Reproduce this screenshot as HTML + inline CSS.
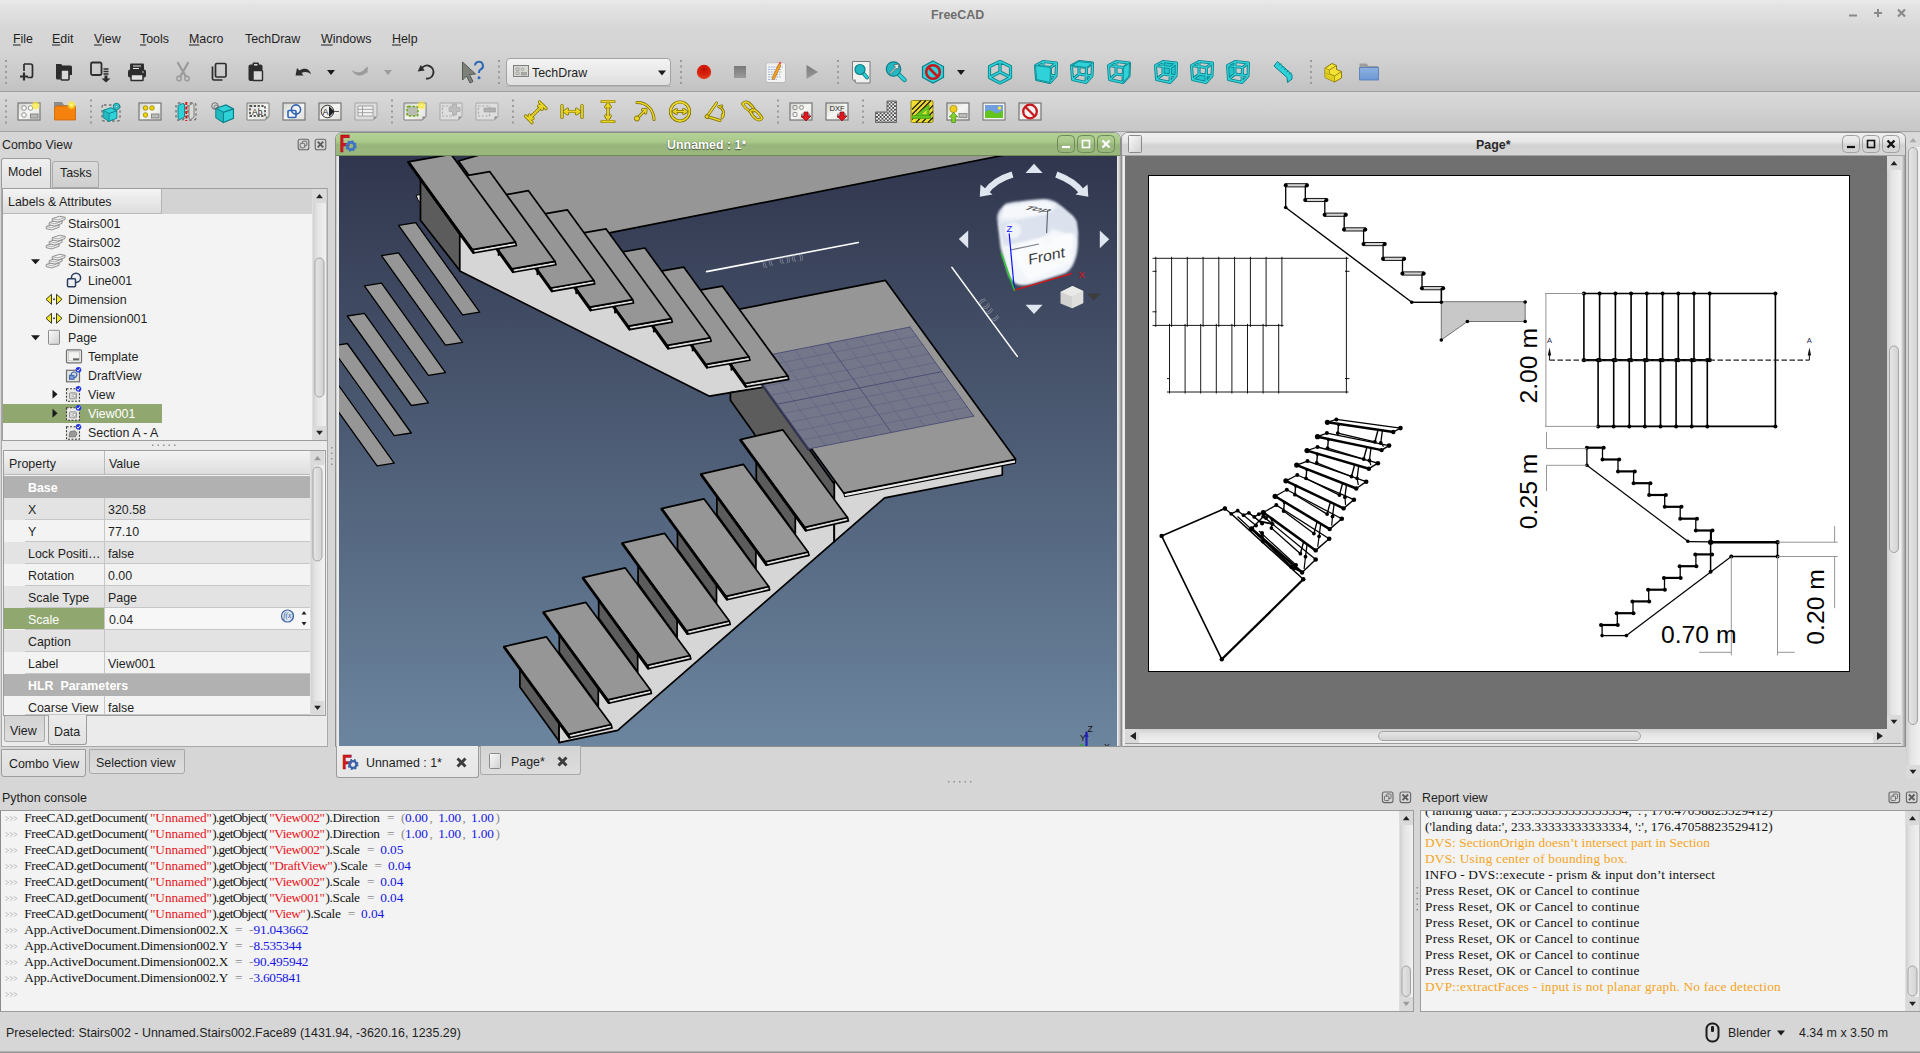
<!DOCTYPE html>
<html><head><meta charset="utf-8"><title>FreeCAD</title>
<style>
*{box-sizing:border-box;margin:0;padding:0}
html,body{width:1920px;height:1053px;overflow:hidden;background:#d6d6d6}
body{position:relative;font-family:"Liberation Sans",sans-serif;font-size:13px;color:#1f1f1f}
.abs{position:absolute}
.t{position:absolute;white-space:nowrap;line-height:16px;height:16px;transform-origin:0 0;transform:translateY(0.5px) scaleX(0.955)}
u{text-decoration:underline;text-underline-offset:2px}
svg{position:absolute;overflow:visible}
.tab{position:absolute;border:1px solid #a9a9a9;border-radius:3px 3px 0 0;background:linear-gradient(#dcdcdc,#cfcfcf)}
.tab.on{background:linear-gradient(#efefef,#e0e0e0);border-color:#9c9c9c}
.serif{font-family:"Liberation Serif",serif}
</style>
</head>
<body>
<div class="abs" style="left:0;top:0;width:1920px;height:91px;background:linear-gradient(#e9e9e9 0,#e2e2e2 8px,#d7d7d7 28px,#d4d4d4 52px,#c6c6c6 84px,#c2c2c2 91px)"></div>
<div class="abs" style="left:0;top:91px;width:1920px;height:1px;background:#9f9f9f"></div>
<div class="abs" style="left:0;top:92px;width:1920px;height:39px;background:linear-gradient(#d9d9d9,#c7c7c7)"></div>
<div class="abs" style="left:0;top:131px;width:1920px;height:1px;background:#a3a3a3"></div>
<div class="t" style="left:931px;top:6px;font-weight:bold;color:#6e6e6e;font-size:13px">FreeCAD</div>
<svg style="left:0;top:0" width="1920" height="28"><path d="M1849 15.5 h8" stroke="#8a8a8a" stroke-width="2"/><path d="M1874 13 h8 M1878 9 v8" stroke="#8a8a8a" stroke-width="2"/><path d="M1898 9.5 l7 7 M1905 9.5 l-7 7" stroke="#8a8a8a" stroke-width="2.2"/></svg>
<div class="t" style="left:13px;top:30px"><u>F</u>ile</div>
<div class="t" style="left:52px;top:30px"><u>E</u>dit</div>
<div class="t" style="left:94px;top:30px"><u>V</u>iew</div>
<div class="t" style="left:140px;top:30px"><u>T</u>ools</div>
<div class="t" style="left:189px;top:30px"><u>M</u>acro</div>
<div class="t" style="left:245px;top:30px">TechDraw</div>
<div class="t" style="left:321px;top:30px"><u>W</u>indows</div>
<div class="t" style="left:392px;top:30px"><u>H</u>elp</div>
<svg style="left:0;top:0" width="1920" height="132"><defs>
<radialGradient id="gred" cx="0.5" cy="0.3" r="0.8"><stop offset="0" stop-color="#c80d00"/><stop offset="0.6" stop-color="#d92810"/><stop offset="1" stop-color="#e8552a"/></radialGradient>
<linearGradient id="ggray" x1="0" y1="0" x2="0" y2="1"><stop offset="0" stop-color="#7a7a7a"/><stop offset="1" stop-color="#9a9a9a"/></linearGradient>
<linearGradient id="gblue" x1="0" y1="0" x2="0" y2="1"><stop offset="0" stop-color="#8fb2e0"/><stop offset="1" stop-color="#6b98d6"/></linearGradient>
<linearGradient id="gpage" x1="0" y1="0" x2="1" y2="1"><stop offset="0" stop-color="#d2d4ce"/><stop offset="0.5" stop-color="#f6f6f4"/><stop offset="1" stop-color="#dcdcd8"/></linearGradient>
<radialGradient id="gglow"><stop offset="0" stop-color="#fffbd0"/><stop offset="0.35" stop-color="#fbe93a"/><stop offset="1" stop-color="#fbe93a" stop-opacity="0"/></radialGradient>
<pattern id="xh" width="3.6" height="3.6" patternUnits="userSpaceOnUse"><rect width="3.6" height="3.6" fill="#f2f2f2"/><path d="M0 0 L3.6 3.6 M3.6 0 L0 3.6" stroke="#4a4a4a" stroke-width="0.9"/></pattern>
</defs><rect x="5" y="60.0" width="2" height="2" fill="#9a9a9a"/><rect x="5" y="65.5" width="2" height="2" fill="#9a9a9a"/><rect x="5" y="71.0" width="2" height="2" fill="#9a9a9a"/><rect x="5" y="76.5" width="2" height="2" fill="#9a9a9a"/><rect x="5" y="82.0" width="2" height="2" fill="#9a9a9a"/><rect x="498" y="60.0" width="2" height="2" fill="#9a9a9a"/><rect x="498" y="65.5" width="2" height="2" fill="#9a9a9a"/><rect x="498" y="71.0" width="2" height="2" fill="#9a9a9a"/><rect x="498" y="76.5" width="2" height="2" fill="#9a9a9a"/><rect x="498" y="82.0" width="2" height="2" fill="#9a9a9a"/><rect x="680" y="60.0" width="2" height="2" fill="#9a9a9a"/><rect x="680" y="65.5" width="2" height="2" fill="#9a9a9a"/><rect x="680" y="71.0" width="2" height="2" fill="#9a9a9a"/><rect x="680" y="76.5" width="2" height="2" fill="#9a9a9a"/><rect x="680" y="82.0" width="2" height="2" fill="#9a9a9a"/><rect x="837" y="60.0" width="2" height="2" fill="#9a9a9a"/><rect x="837" y="65.5" width="2" height="2" fill="#9a9a9a"/><rect x="837" y="71.0" width="2" height="2" fill="#9a9a9a"/><rect x="837" y="76.5" width="2" height="2" fill="#9a9a9a"/><rect x="837" y="82.0" width="2" height="2" fill="#9a9a9a"/><rect x="1310" y="60.0" width="2" height="2" fill="#9a9a9a"/><rect x="1310" y="65.5" width="2" height="2" fill="#9a9a9a"/><rect x="1310" y="71.0" width="2" height="2" fill="#9a9a9a"/><rect x="1310" y="76.5" width="2" height="2" fill="#9a9a9a"/><rect x="1310" y="82.0" width="2" height="2" fill="#9a9a9a"/><g transform="translate(27,72)"><path d="M-3 -8 h6.5 a2 2 0 0 1 2 2 v9.5 a2 2 0 0 1 -2 2 h-3" fill="none" stroke="#2d2d2d" stroke-width="1.7"/><path d="M-3 -8 v7" stroke="#2d2d2d" stroke-width="1.7" fill="none"/><path d="M-7 4.5 h8 M-3 0.5 v8" stroke="#2d2d2d" stroke-width="2.2"/></g><g transform="translate(64,72)"><path d="M-8 -8 h5 l1.5 1.5 h8 a1.5 1.5 0 0 1 1.5 1.5 v8 h-16z" fill="#2d2d2d"/><rect x="-3" y="-2" width="8" height="10" rx="1" fill="#d9d9d9" stroke="#2d2d2d" stroke-width="1.6"/><path d="M-8 3 v3 a1.5 1.5 0 0 0 1.5 1.5 h3 v-4.5z" fill="#2d2d2d"/></g><g transform="translate(100,72)"><rect x="-9" y="-9.5" width="10.5" height="12.5" rx="1.5" fill="none" stroke="#2d2d2d" stroke-width="1.8"/><path d="M3.5 -3 h5 M3.5 -0.5 h5 M3.5 2 h5" stroke="#2d2d2d" stroke-width="1.3"/><path d="M4.5 3.5 h3 v3 h3 l-4.5 4 l-4.5 -4 h3z" fill="#2d2d2d"/></g><g transform="translate(137,72)"><rect x="-7" y="-8.5" width="14" height="8" rx="1" fill="#2d2d2d"/><path d="M-4 -6 h8 M-4 -3.5 h6" stroke="#e6e6e6" stroke-width="1.2"/><rect x="-9" y="-2.5" width="18" height="8" rx="2" fill="#2d2d2d"/><rect x="-6" y="2.5" width="12" height="6" rx="0.5" fill="#e2e2e2" stroke="#2d2d2d" stroke-width="1.5"/><circle cx="6" cy="0" r="0.8" fill="#ddd"/></g><g transform="translate(183,72)"><path d="M-5 -9 L2.5 4 M5 -9 L-2.5 4" stroke="#9a9a9a" stroke-width="2.2" stroke-linecap="round"/><circle cx="-4" cy="6.5" r="2.2" fill="none" stroke="#9a9a9a" stroke-width="1.4"/><circle cx="4" cy="6.5" r="2.2" fill="none" stroke="#9a9a9a" stroke-width="1.4"/></g><g transform="translate(219,72)"><rect x="-3.5" y="-8.5" width="10.5" height="13.5" rx="1.3" fill="none" stroke="#2d2d2d" stroke-width="1.7"/><path d="M-6.5 -5.5 v12 a1.5 1.5 0 0 0 1.5 1.5 h8.5" fill="none" stroke="#2d2d2d" stroke-width="1.7"/></g><g transform="translate(256,72)"><rect x="-7.5" y="-7.5" width="14" height="16.5" rx="2" fill="#2d2d2d"/><rect x="-3.5" y="-9.5" width="6.5" height="4" rx="1.2" fill="#2d2d2d"/><rect x="-2" y="-8" width="3.5" height="1.6" fill="#d6d6d6"/><rect x="-3" y="-1.5" width="9.5" height="10" rx="0.8" fill="#d8d8d8" stroke="#2d2d2d" stroke-width="1.4"/></g><g transform="translate(303,72)"><path d="M-7.5 3.5 L-6 -4 L-3.5 -1.5 C1 -5 7 -3.5 8 2.5 C5 -0.5 1.5 -0.5 -1.5 1 L0.5 3.5 Z" fill="#2d2d2d"/></g><g transform="translate(360,72)"><path d="M7.5 1.5 L7.8 -5.5 L5 -3.5 C2.5 1 -3.5 1.5 -8 -2 C-6 4 2 5.5 6.5 0.5 Z" fill="#9c9c9c"/></g><g transform="translate(426,72)"><path d="M-4.5 -3.5 A6.5 6.5 0 1 1 0 6.5" fill="none" stroke="#2d2d2d" stroke-width="1.9"/><path d="M-8.3 -0.5 L-5.3 -7 L-1.3 -1.5 Z" fill="#2d2d2d"/></g><g transform="translate(472,72)"><path d="M-9.500 -10 L3.500 2 L-2.500 2.500 L1 9.500 L-2 11 L-5.500 4 L-9.500 8 Z" fill="#7c8279" stroke="#4b4f49" stroke-width="0.9"/><path d="M3 -6.500 a4 4 0 1 1 5.500 4 q-1.600 0.800 -1.600 3.500" fill="none" stroke="#2f6ab5" stroke-width="2"/><circle cx="7" cy="5.800" r="1.500" fill="#2f6ab5"/></g><g transform="translate(704,72)"><circle cx="0" cy="0" r="7.2" fill="url(#gred)"/></g><g transform="translate(740,72)"><rect x="-6" y="-6" width="12" height="12" fill="url(#ggray)"/></g><g transform="translate(776,72)"><rect x="-10" y="-9.5" width="19.5" height="20" rx="2" fill="#f4f4f2" stroke="#b8b8b8" stroke-width="1"/><path d="M-8 -5 h15 M-8 -2.5 h13 M-8 0 h14 M-8 2.5 h12 M-8 5 h13 M-8 7.5 h9" stroke="#8aa4d6" stroke-width="0.8" stroke-dasharray="2 0.7"/><path d="M-7 -10.5 v3 M-4 -10.5 v3 M-1 -10.5 v3 M2 -10.5 v3 M5 -10.5 v3 M8 -10.5 v3" stroke="#d8d8d8" stroke-width="1.3"/><path d="M2.5 -8 L5 -7 L-1.5 7 L-3.5 7.5 L-3.8 5.5 Z" fill="#f0a020" stroke="#b86c0a" stroke-width="0.6"/><circle cx="4" cy="-9" r="1.3" fill="#e2605a"/></g><g transform="translate(812,72)"><path d="M-5.5 -7 L6 0 L-5.5 7 Z" fill="url(#ggray)"/></g><g transform="translate(861,72)"><path d="M-8.5 -10.5 h17.5 v21.5 h-14 l-3.5 -3.5z" fill="#f0f0ee" stroke="#7a7a7a" stroke-width="1"/><path d="M-8.5 7.5 h3.5 v3.5z" fill="#9a9a9a"/><path d="M-1 -2.5 L6 5.5" stroke="#0b7f88" stroke-width="3.8" stroke-linecap="round"/><path d="M-1 -2.5 L6 5.5" stroke="#2fd2d8" stroke-width="2.0" stroke-linecap="round"/><circle cx="-1" cy="-2.5" r="5" fill="#22b8c2" stroke="#0b7f88" stroke-width="1.2"/></g><g transform="translate(896,72)"><path d="M-2.5 -3 L8.5 8" stroke="#0b7f88" stroke-width="4.4" stroke-linecap="round"/><path d="M-2.5 -3 L8.5 8" stroke="#2fd2d8" stroke-width="2.6" stroke-linecap="round"/><circle cx="-2.5" cy="-3" r="7.2" fill="#22b8c2" stroke="#0b7f88" stroke-width="1.2"/><path d="M-6.5 1 L-0.5 -5 L-2.5 -7 L3 -8 L2 -2.5 L0.5 -4 L-5.5 2 Z" fill="#e8e8e8" stroke="#555" stroke-width="0.7"/></g><g transform="translate(933,72)"><path d="M0 -11 L10.5 -5.5 V5.5 L0 11 L-10.5 5.5 V-5.5 Z" fill="#2fd2d8" stroke="#0b7f88" stroke-width="1.2"/><circle cx="0" cy="0" r="6.8" fill="none" stroke="#c8161d" stroke-width="2.6"/><path d="M-4.76 -4.76 L4.76 4.76" stroke="#c8161d" stroke-width="2.6"/></g><g transform="translate(1000,72)"><path d="M0 -10.5 L10.5 -5.5 V5.5 L0 11 L-10.5 5.5 V-5.5 Z M0 -10.5 V0 M0 0 L-10.5 5.5 M0 0 L10.5 5.5" fill="none" stroke="#0b7f88" stroke-width="3.2" stroke-linejoin="round"/><path d="M0 -10.5 L10.5 -5.5 V5.5 L0 11 L-10.5 5.5 V-5.5 Z M0 -10.5 V0 M0 0 L-10.5 5.5 M0 0 L10.5 5.5" fill="none" stroke="#2fd2d8" stroke-width="1.5" stroke-linejoin="round"/></g><g transform="translate(1046,72)"><path d="M-10.5 -6.5 L4.5 -4.5 L4 10.5 L-9.5 7.5 Z M-3 -10.5 L10.5 -9 L10 4 L-3 2 Z M-10.5 -6.5 L-3 -10.5 M4.5 -4.5 L10.5 -9 M4 10.5 L10 4 M-9.5 7.5 L-3 2" fill="none" stroke="#0b7f88" stroke-width="3" stroke-linejoin="round"/><path d="M-10.5 -6.5 L4.5 -4.5 L4 10.5 L-9.5 7.5 Z M-3 -10.5 L10.5 -9 L10 4 L-3 2 Z M-10.5 -6.5 L-3 -10.5 M4.5 -4.5 L10.5 -9 M4 10.5 L10 4 M-9.5 7.5 L-3 2" fill="none" stroke="#2fd2d8" stroke-width="1.4" stroke-linejoin="round"/><path d="M-10.5 -6.5 L4.5 -4.5 L4 10.5 L-9.5 7.5 Z" fill="#2fd2d8" stroke="#0b7f88" stroke-width="0.8"/></g><g transform="translate(1082,72)"><path d="M-10.5 -6.5 L4.5 -4.5 L4 10.5 L-9.5 7.5 Z M-3 -10.5 L10.5 -9 L10 4 L-3 2 Z M-10.5 -6.5 L-3 -10.5 M4.5 -4.5 L10.5 -9 M4 10.5 L10 4 M-9.5 7.5 L-3 2" fill="none" stroke="#0b7f88" stroke-width="3" stroke-linejoin="round"/><path d="M-10.5 -6.5 L4.5 -4.5 L4 10.5 L-9.5 7.5 Z M-3 -10.5 L10.5 -9 L10 4 L-3 2 Z M-10.5 -6.5 L-3 -10.5 M4.5 -4.5 L10.5 -9 M4 10.5 L10 4 M-9.5 7.5 L-3 2" fill="none" stroke="#2fd2d8" stroke-width="1.4" stroke-linejoin="round"/><path d="M-10.5 -6.5 L4.5 -4.5 L10.5 -9 L-3 -10.5 Z" fill="#2fd2d8" stroke="#0b7f88" stroke-width="0.8"/></g><g transform="translate(1119,72)"><path d="M-10.5 -6.5 L4.5 -4.5 L4 10.5 L-9.5 7.5 Z M-3 -10.5 L10.5 -9 L10 4 L-3 2 Z M-10.5 -6.5 L-3 -10.5 M4.5 -4.5 L10.5 -9 M4 10.5 L10 4 M-9.5 7.5 L-3 2" fill="none" stroke="#0b7f88" stroke-width="3" stroke-linejoin="round"/><path d="M-10.5 -6.5 L4.5 -4.5 L4 10.5 L-9.5 7.5 Z M-3 -10.5 L10.5 -9 L10 4 L-3 2 Z M-10.5 -6.5 L-3 -10.5 M4.5 -4.5 L10.5 -9 M4 10.5 L10 4 M-9.5 7.5 L-3 2" fill="none" stroke="#2fd2d8" stroke-width="1.4" stroke-linejoin="round"/><path d="M4.5 -4.5 L10.5 -9 L10 4 L4 10.5 Z" fill="#2fd2d8" stroke="#0b7f88" stroke-width="0.8"/></g><g transform="translate(1166,72)"><path d="M-3 -10.5 L10.5 -9 L10 4 L-3 2 Z" fill="#25c3cc"/><path d="M-10.5 -6.5 L4.5 -4.5 L4 10.5 L-9.5 7.5 Z M-3 -10.5 L10.5 -9 L10 4 L-3 2 Z M-10.5 -6.5 L-3 -10.5 M4.5 -4.5 L10.5 -9 M4 10.5 L10 4 M-9.5 7.5 L-3 2" fill="none" stroke="#0b7f88" stroke-width="3" stroke-linejoin="round"/><path d="M-10.5 -6.5 L4.5 -4.5 L4 10.5 L-9.5 7.5 Z M-3 -10.5 L10.5 -9 L10 4 L-3 2 Z M-10.5 -6.5 L-3 -10.5 M4.5 -4.5 L10.5 -9 M4 10.5 L10 4 M-9.5 7.5 L-3 2" fill="none" stroke="#2fd2d8" stroke-width="1.4" stroke-linejoin="round"/></g><g transform="translate(1202,72)"><path d="M-9.5 7.5 L4 10.5 L10 4 L-3 2 Z" fill="#25c3cc"/><path d="M-10.5 -6.5 L4.5 -4.5 L4 10.5 L-9.5 7.5 Z M-3 -10.5 L10.5 -9 L10 4 L-3 2 Z M-10.5 -6.5 L-3 -10.5 M4.5 -4.5 L10.5 -9 M4 10.5 L10 4 M-9.5 7.5 L-3 2" fill="none" stroke="#0b7f88" stroke-width="3" stroke-linejoin="round"/><path d="M-10.5 -6.5 L4.5 -4.5 L4 10.5 L-9.5 7.5 Z M-3 -10.5 L10.5 -9 L10 4 L-3 2 Z M-10.5 -6.5 L-3 -10.5 M4.5 -4.5 L10.5 -9 M4 10.5 L10 4 M-9.5 7.5 L-3 2" fill="none" stroke="#2fd2d8" stroke-width="1.4" stroke-linejoin="round"/></g><g transform="translate(1238,72)"><path d="M-10.5 -6.5 L-3 -10.5 L-3 2 L-9.5 7.5 Z" fill="#25c3cc"/><path d="M-10.5 -6.5 L4.5 -4.5 L4 10.5 L-9.5 7.5 Z M-3 -10.5 L10.5 -9 L10 4 L-3 2 Z M-10.5 -6.5 L-3 -10.5 M4.5 -4.5 L10.5 -9 M4 10.5 L10 4 M-9.5 7.5 L-3 2" fill="none" stroke="#0b7f88" stroke-width="3" stroke-linejoin="round"/><path d="M-10.5 -6.5 L4.5 -4.5 L4 10.5 L-9.5 7.5 Z M-3 -10.5 L10.5 -9 L10 4 L-3 2 Z M-10.5 -6.5 L-3 -10.5 M4.5 -4.5 L10.5 -9 M4 10.5 L10 4 M-9.5 7.5 L-3 2" fill="none" stroke="#2fd2d8" stroke-width="1.4" stroke-linejoin="round"/></g><g transform="translate(1284,72)"><path d="M-10 -6 L-6.5 -10.5 L8 2.5 L8 7 L3.5 10.5 L3 5.5 Z" fill="#2fd2d8" stroke="#0b7f88" stroke-width="1"/><path d="M-5 -6.5 l2 -2 M-2.5 -4.2 l1.6 -1.6 M0 -2 l2 -2 M2.5 0.3 l1.6 -1.6 M5 2.5 l2 -2" stroke="#0b7f88" stroke-width="1"/></g><g transform="translate(1333,72)"><path d="M-8 -4 L-1 -8.5 L3.5 -6.5 L3.5 -2.5 L8.5 -0.5 L8.5 6 L1.5 10 L-8 5.5 Z" fill="#f3e233" stroke="#8d7d0d" stroke-width="1"/><path d="M-8 -4 L-3.5 -2 L3.5 -6.5 M-3.5 -2 V2 L1.5 4 L8.5 -0.5 M1.5 4 V10 M-8 0.8 L-3.5 2.8" fill="none" stroke="#8d7d0d" stroke-width="0.9"/><path d="M-8 -4 L-3.5 -2 V2.8 L1.5 4.5 V10 L-8 5.5 Z" fill="#d8c416" opacity="0.7"/></g><g transform="translate(1369.5,72)"><path d="M-10 -8.5 h7 l2 2.5 h9.5 v4 h-18.5z" fill="#9d9d9d"/><path d="M-10 -4.5 h19 v12.5 h-19z" fill="url(#gblue)" stroke="#4f78b5" stroke-width="0.8"/></g><path d="M327 70 h8 l-4 5z" fill="#1a1a1a"/><path d="M384 70 h8 l-4 5z" fill="#9c9c9c"/><path d="M957 70 h8 l-4 5z" fill="#1a1a1a"/><rect x="506.5" y="58.5" width="164" height="27" rx="3.5" fill="url(#gcombo)" stroke="#a2a2a2"/><defs><linearGradient id="gcombo" x1="0" y1="0" x2="0" y2="1"><stop offset="0" stop-color="#f4f4f4"/><stop offset="1" stop-color="#dedede"/></linearGradient></defs><path d="M506 86.5 h165" stroke="#b4b4b4" stroke-width="1"/><rect x="513.5" y="65.500" width="15" height="11" fill="#d7d9d3" stroke="#7f7f7f"/><rect x="516" y="68" width="3" height="2.5" fill="none" stroke="#888" stroke-width="0.6"/><circle cx="522.5" cy="69.3" r="1.4" fill="none" stroke="#888" stroke-width="0.6"/><rect x="516" y="72" width="3" height="2.5" fill="none" stroke="#888" stroke-width="0.6"/><rect x="521.5" y="72.500" width="5" height="2.5" fill="#aaa" stroke="#888" stroke-width="0.5"/><path d="M658 70.5 h8 l-4 5z" fill="#1a1a1a"/><rect x="5" y="99.5" width="2" height="2" fill="#9a9a9a"/><rect x="5" y="105.0" width="2" height="2" fill="#9a9a9a"/><rect x="5" y="110.5" width="2" height="2" fill="#9a9a9a"/><rect x="5" y="116.0" width="2" height="2" fill="#9a9a9a"/><rect x="5" y="121.5" width="2" height="2" fill="#9a9a9a"/><rect x="90" y="99.5" width="2" height="2" fill="#9a9a9a"/><rect x="90" y="105.0" width="2" height="2" fill="#9a9a9a"/><rect x="90" y="110.5" width="2" height="2" fill="#9a9a9a"/><rect x="90" y="116.0" width="2" height="2" fill="#9a9a9a"/><rect x="90" y="121.5" width="2" height="2" fill="#9a9a9a"/><rect x="391" y="99.5" width="2" height="2" fill="#9a9a9a"/><rect x="391" y="105.0" width="2" height="2" fill="#9a9a9a"/><rect x="391" y="110.5" width="2" height="2" fill="#9a9a9a"/><rect x="391" y="116.0" width="2" height="2" fill="#9a9a9a"/><rect x="391" y="121.5" width="2" height="2" fill="#9a9a9a"/><rect x="512" y="99.5" width="2" height="2" fill="#9a9a9a"/><rect x="512" y="105.0" width="2" height="2" fill="#9a9a9a"/><rect x="512" y="110.5" width="2" height="2" fill="#9a9a9a"/><rect x="512" y="116.0" width="2" height="2" fill="#9a9a9a"/><rect x="512" y="121.5" width="2" height="2" fill="#9a9a9a"/><rect x="777" y="99.5" width="2" height="2" fill="#9a9a9a"/><rect x="777" y="105.0" width="2" height="2" fill="#9a9a9a"/><rect x="777" y="110.5" width="2" height="2" fill="#9a9a9a"/><rect x="777" y="116.0" width="2" height="2" fill="#9a9a9a"/><rect x="777" y="121.5" width="2" height="2" fill="#9a9a9a"/><rect x="862" y="99.5" width="2" height="2" fill="#9a9a9a"/><rect x="862" y="105.0" width="2" height="2" fill="#9a9a9a"/><rect x="862" y="110.5" width="2" height="2" fill="#9a9a9a"/><rect x="862" y="116.0" width="2" height="2" fill="#9a9a9a"/><rect x="862" y="121.5" width="2" height="2" fill="#9a9a9a"/><g transform="translate(29,111.5)"><rect x="-11.0" y="-8.5" width="22" height="17" fill="url(#gpage)" stroke="#7d7d7d" stroke-width="1.3"/><circle cx="-5" cy="-3.5" r="2.3" fill="#fff" stroke="#777" stroke-width="0.8"/><circle cx="1.5" cy="-3.5" r="2.3" fill="#fff" stroke="#777" stroke-width="0.8"/><circle cx="-5" cy="3.5" r="2.3" fill="#fff" stroke="#777" stroke-width="0.8"/><rect x="1.5" y="2.5" width="7.5" height="4" fill="#bbb" stroke="#777" stroke-width="0.8"/><circle cx="6.5" cy="-6" r="5" fill="url(#gglow)"/></g><g transform="translate(65,111.5)"><path d="M-11 -9.5 h8 l2 3 h10 v4 h-20z" fill="#8c8c8c"/><path d="M-10.5 -3.5 L-9 -5.5 h19.5 v14 h-21z" fill="#f4820c" stroke="#c96606" stroke-width="0.8"/><circle cx="6.5" cy="-6.5" r="5" fill="url(#gglow)"/></g><g transform="translate(112,111.5)"><rect x="-10" y="-6.5" width="18" height="16" rx="2" fill="none" stroke="#6f6f6f" stroke-width="1.3" stroke-dasharray="2.5 2.5"/><g transform="translate(-2.5,2.5) scale(1.05)"><path d="M-6 -3.5 L1.5 -6 L7 -3 L7 4 L-0.5 7 L-6 3.5 Z" fill="#2fd2d8" stroke="#0b7f88" stroke-width="0.9"/><path d="M-6 -3.5 L-0.5 -0.5 L7 -3 M-0.5 -0.5 V7" fill="none" stroke="#0b7f88" stroke-width="0.9"/><path d="M-6 -3.5 L-0.5 -0.5 V7 L-6 3.5Z" fill="#1aa9b3" opacity="0.6"/></g><circle cx="4.5" cy="-5" r="3.2" fill="#2fd2d8" stroke="#0b7f88" stroke-width="1"/><circle cx="4.5" cy="-5" r="1.2" fill="#d6d6d6" stroke="#0b7f88" stroke-width="0.6"/></g><g transform="translate(150,111.5)"><rect x="-11.0" y="-8.5" width="22" height="17" fill="url(#gpage)" stroke="#7d7d7d" stroke-width="1.3"/><circle cx="-4.5" cy="-3.5" r="2.3" fill="#f2d400" stroke="#8a7800" stroke-width="0.7"/><circle cx="2" cy="-3.5" r="2.3" fill="#f2d400" stroke="#8a7800" stroke-width="0.7"/><circle cx="-4.5" cy="3.5" r="2.3" fill="#f2d400" stroke="#8a7800" stroke-width="0.7"/><rect x="1.5" y="2.5" width="7.5" height="4" fill="#bbb" stroke="#777" stroke-width="0.8"/></g><g transform="translate(186,111.5)"><rect x="-10" y="-8.5" width="8" height="17" rx="2" fill="none" stroke="#6f6f6f" stroke-width="1.3" stroke-dasharray="2.5 2.5"/><rect x="2" y="-8.5" width="8" height="17" rx="2" fill="none" stroke="#6f6f6f" stroke-width="1.3" stroke-dasharray="2.5 2.5"/><path d="M-8 -6 L-3.5 -8 L-1.5 -7 V5.5 L-6 8 L-8 6.5Z" fill="#2fd2d8" stroke="#0b7f88" stroke-width="0.9"/><path d="M3 -6 L6.5 -8 L8 -7 V5.5 L4.5 8 L3 6.5Z" fill="#d8dad4" stroke="#777" stroke-width="0.9"/><path d="M0.3 -9.5 V9.5" stroke="#e01010" stroke-width="2" stroke-dasharray="3 1.5"/></g><g transform="translate(222,111.5)"><g transform="translate(2,1.5) scale(1.35)"><path d="M-6 -3.5 L1.5 -6 L7 -3 L7 4 L-0.5 7 L-6 3.5 Z" fill="#2fd2d8" stroke="#0b7f88" stroke-width="0.9"/><path d="M-6 -3.5 L-0.5 -0.5 L7 -3 M-0.5 -0.5 V7" fill="none" stroke="#0b7f88" stroke-width="0.9"/><path d="M-6 -3.5 L-0.5 -0.5 V7 L-6 3.5Z" fill="#1aa9b3" opacity="0.6"/></g><circle cx="-7" cy="-5.5" r="3.3" fill="none" stroke="#666" stroke-width="0.9"/><circle cx="-6" cy="-4.5" r="2" fill="none" stroke="#666" stroke-width="0.7"/></g><g transform="translate(258,111.5)"><path d="M-11.0 -8.5 h22 v13.5 l-3.5 3.5 h-18.5 z" fill="url(#gpage)" stroke="#7d7d7d" stroke-width="1"/><path d="M7.5 8.5 v-3.5 h3.5z" fill="#8a8a8a"/><rect x="-8" y="-5.5" width="15" height="10" fill="none" stroke="#222" stroke-width="1.3" stroke-dasharray="2.2 1.6"/><text x="-6" y="3" font-family="Liberation Sans" font-size="8.5" fill="#222">Ab</text></g><g transform="translate(294,111.5)"><rect x="-11.0" y="-8.5" width="22" height="17" fill="url(#gpage)" stroke="#7d7d7d" stroke-width="1.3"/><circle cx="2" cy="-2" r="4.6" fill="none" stroke="#2f63b8" stroke-width="1.6"/><rect x="-6" y="-1" width="8" height="7" rx="1" fill="none" stroke="#2f63b8" stroke-width="1.6"/></g><g transform="translate(330,111.5)"><rect x="-11.0" y="-8.5" width="22" height="17" fill="url(#gpage)" stroke="#7d7d7d" stroke-width="1.3"/><circle cx="-2.5" cy="0" r="6.3" fill="none" stroke="#222" stroke-width="0.9"/><text x="-7.5" y="3.3" font-family="Liberation Sans" font-size="9" fill="#222">A</text><path d="M-1 -5.5 L4.5 0 L-1 5.5Z" fill="#222"/><path d="M4 0 H9" stroke="#555" stroke-width="1"/></g><g transform="translate(366,111.5)"><path d="M-11.0 -8.5 h22 v13.5 l-3.5 3.5 h-18.5 z" fill="#dcdcdc" stroke="#a3a3a3" stroke-width="1"/><path d="M7.5 8.5 v-3.5 h3.5z" fill="#8a8a8a"/><path d="M-8 -5.5 h15 v10 h-15z M-8 -2.2 h15 M-8 1.2 h15 M-3.5 -5.5 v10" fill="#f2f2f2" stroke="#9a9a9a" stroke-width="0.9"/></g><g transform="translate(415,111.5)"><path d="M-11.0 -8.5 h22 v13.5 l-3.5 3.5 h-18.5 z" fill="url(#gpage)" stroke="#7d7d7d" stroke-width="1"/><path d="M7.5 8.5 v-3.5 h3.5z" fill="#8a8a8a"/><rect x="-8" y="-5" width="11" height="9.5" rx="1.5" fill="#b9bcb4" stroke="#6aa70c" stroke-width="1.5" stroke-dasharray="2.4 1.6"/><circle cx="6.5" cy="-6" r="5" fill="url(#gglow)"/></g><g transform="translate(451,111.5)"><path d="M-11.0 -8.5 h22 v13.5 l-3.5 3.5 h-18.5 z" fill="#dedede" stroke="#a8a8a8" stroke-width="1"/><path d="M7.5 8.5 v-3.5 h3.5z" fill="#8a8a8a"/><rect x="-8.5" y="-5.5" width="11" height="10" fill="none" stroke="#aaa" stroke-width="1.2" stroke-dasharray="2.2 1.6"/><path d="M1.5 -7.5 h4 v3.5 h3.5 v4 h-3.5 v3.5 h-4 v-3.5 h-3.5 v-4 h3.5z" fill="#bdbdbd" stroke="#a0a0a0" stroke-width="0.6"/></g><g transform="translate(487,111.5)"><path d="M-11.0 -8.5 h22 v13.5 l-3.5 3.5 h-18.5 z" fill="#dedede" stroke="#a8a8a8" stroke-width="1"/><path d="M7.5 8.5 v-3.5 h3.5z" fill="#8a8a8a"/><rect x="-8.5" y="-5.5" width="11" height="10" fill="none" stroke="#aaa" stroke-width="1.2" stroke-dasharray="2.2 1.6"/><rect x="-3" y="-3.5" width="11.5" height="4" fill="#b0b0b0" stroke="#9a9a9a" stroke-width="0.6"/></g><g transform="translate(536,111.5)"><path d="M-10.5 4.5 L-4 11 M3.5 -9.5 L10 -3 M-7 7.5 L6.5 -6 M-7 7.5 l0.5 -4 M-7 7.5 l4 -0.5 M6.5 -6 l-4 0.5 M6.5 -6 l-0.5 4" fill="none" stroke="#7a6b00" stroke-width="3.2" stroke-linecap="round" stroke-linejoin="round"/><path d="M-10.5 4.5 L-4 11 M3.5 -9.5 L10 -3 M-7 7.5 L6.5 -6 M-7 7.5 l0.5 -4 M-7 7.5 l4 -0.5 M6.5 -6 l-4 0.5 M6.5 -6 l-0.5 4" fill="none" stroke="#e8d526" stroke-width="1.8" stroke-linecap="round" stroke-linejoin="round"/></g><g transform="translate(572,111.5)"><path d="M-10 -6 V6 M10 -6 V6 M-7.5 0 H7.5 M-7.5 0 l3 -2.2 M-7.5 0 l3 2.2 M7.5 0 l-3 -2.2 M7.5 0 l-3 2.2" fill="none" stroke="#7a6b00" stroke-width="3.2" stroke-linecap="round" stroke-linejoin="round"/><path d="M-10 -6 V6 M10 -6 V6 M-7.5 0 H7.5 M-7.5 0 l3 -2.2 M-7.5 0 l3 2.2 M7.5 0 l-3 -2.2 M7.5 0 l-3 2.2" fill="none" stroke="#e8d526" stroke-width="1.8" stroke-linecap="round" stroke-linejoin="round"/></g><g transform="translate(608,111.5)"><path d="M-6 -10 H6 M-6 10 H6 M0 -7.5 V7.5 M0 -7.5 l-2.2 3 M0 -7.5 l2.2 3 M0 7.5 l-2.2 -3 M0 7.5 l2.2 -3" fill="none" stroke="#7a6b00" stroke-width="3.2" stroke-linecap="round" stroke-linejoin="round"/><path d="M-6 -10 H6 M-6 10 H6 M0 -7.5 V7.5 M0 -7.5 l-2.2 3 M0 -7.5 l2.2 3 M0 7.5 l-2.2 -3 M0 7.5 l2.2 -3" fill="none" stroke="#e8d526" stroke-width="1.8" stroke-linecap="round" stroke-linejoin="round"/></g><g transform="translate(644,111.5)"><path d="M-7 -9 C3 -9 9.5 -2 10 8" fill="none" stroke="#7a6b00" stroke-width="3.0" stroke-linecap="round" stroke-linejoin="round"/><path d="M-7 -9 C3 -9 9.5 -2 10 8" fill="none" stroke="#e8d526" stroke-width="1.6" stroke-linecap="round" stroke-linejoin="round"/><path d="M-6.5 6.5 L2 -2 M2 -2 l-3.5 0.3 M2 -2 l-0.3 3.5" fill="none" stroke="#7a6b00" stroke-width="3.0" stroke-linecap="round" stroke-linejoin="round"/><path d="M-6.5 6.5 L2 -2 M2 -2 l-3.5 0.3 M2 -2 l-0.3 3.5" fill="none" stroke="#e8d526" stroke-width="1.6" stroke-linecap="round" stroke-linejoin="round"/><circle cx="-7" cy="7" r="2.6" fill="#e8d526" stroke="#7a6b00" stroke-width="0.9"/></g><g transform="translate(680,111.5)"><path d="M-9.5 0 A9.5 9.5 0 1 1 9.5 0 A9.5 9.5 0 1 1 -9.5 0" fill="none" stroke="#7a6b00" stroke-width="3.2" stroke-linecap="round" stroke-linejoin="round"/><path d="M-9.5 0 A9.5 9.5 0 1 1 9.5 0 A9.5 9.5 0 1 1 -9.5 0" fill="none" stroke="#e8d526" stroke-width="1.8" stroke-linecap="round" stroke-linejoin="round"/><path d="M-6.5 0 H6.5 M-6.5 0 l3 -2 M-6.5 0 l3 2 M6.5 0 l-3 -2 M6.5 0 l-3 2" fill="none" stroke="#7a6b00" stroke-width="2.9" stroke-linecap="round" stroke-linejoin="round"/><path d="M-6.5 0 H6.5 M-6.5 0 l3 -2 M-6.5 0 l3 2 M6.5 0 l-3 -2 M6.5 0 l-3 2" fill="none" stroke="#e8d526" stroke-width="1.5" stroke-linecap="round" stroke-linejoin="round"/></g><g transform="translate(716,111.5)"><path d="M-9 5 L0.5 -8.5 M-9 5 L4 9" fill="none" stroke="#7a6b00" stroke-width="3.0" stroke-linecap="round" stroke-linejoin="round"/><path d="M-9 5 L0.5 -8.5 M-9 5 L4 9" fill="none" stroke="#e8d526" stroke-width="1.6" stroke-linecap="round" stroke-linejoin="round"/><path d="M2.5 -5 C8 -3 9 3 6 6.5 M2.5 -5 l3.5 -0.6 M6 6.5 l0.4 -3.6" fill="none" stroke="#7a6b00" stroke-width="2.5999999999999996" stroke-linecap="round" stroke-linejoin="round"/><path d="M2.5 -5 C8 -3 9 3 6 6.5 M2.5 -5 l3.5 -0.6 M6 6.5 l0.4 -3.6" fill="none" stroke="#e8d526" stroke-width="1.2" stroke-linecap="round" stroke-linejoin="round"/><circle cx="-9" cy="5" r="2" fill="#e8d526" stroke="#7a6b00" stroke-width="0.9"/></g><g transform="translate(752,111.5)"><path d="M-9.5 -7.5 C-6 -12 -1 -8 2.5 -1.5 C0 2 -5 -1 -9.5 -7.5 Z" fill="none" stroke="#7a6b00" stroke-width="3.0" stroke-linecap="round" stroke-linejoin="round"/><path d="M-9.5 -7.5 C-6 -12 -1 -8 2.5 -1.5 C0 2 -5 -1 -9.5 -7.5 Z" fill="none" stroke="#e8d526" stroke-width="1.6" stroke-linecap="round" stroke-linejoin="round"/><path d="M-2 0 C1.5 -4 6 0 10 6.5 C7 11 2 7 -2 0 Z" fill="none" stroke="#7a6b00" stroke-width="3.0" stroke-linecap="round" stroke-linejoin="round"/><path d="M-2 0 C1.5 -4 6 0 10 6.5 C7 11 2 7 -2 0 Z" fill="none" stroke="#e8d526" stroke-width="1.6" stroke-linecap="round" stroke-linejoin="round"/></g><g transform="translate(801,111.5)"><rect x="-11.0" y="-8.5" width="22" height="17" fill="url(#gpage)" stroke="#7d7d7d" stroke-width="1.3"/><rect x="-8" y="-6" width="4" height="4" rx="1" fill="none" stroke="#777" stroke-width="0.8"/><circle cx="0.5" cy="-4" r="2" fill="none" stroke="#777" stroke-width="0.8"/><rect x="-8" y="1" width="4" height="4" rx="1" fill="none" stroke="#777" stroke-width="0.8"/><rect x="0.5" y="2.5" width="8" height="3.5" fill="#bbb" stroke="#777" stroke-width="0.7"/><path d="M3 0.5 h4 v4 h3 l-5 5 l-5 -5 h3z" fill="#e01822" stroke="#8e0a10" stroke-width="0.7"/></g><g transform="translate(837,111.5)"><rect x="-11.0" y="-8.5" width="22" height="17" fill="url(#gpage)" stroke="#7d7d7d" stroke-width="1.3"/><text x="-7.6" y="-0.5" font-family="Liberation Sans" font-size="7.6" fill="#222">DXF</text><rect x="0.5" y="2.5" width="8" height="3.5" fill="#bbb" stroke="#777" stroke-width="0.7"/><path d="M3 0.5 h4 v4 h3 l-5 5 l-5 -5 h3z" fill="#e01822" stroke="#8e0a10" stroke-width="0.7"/></g><g transform="translate(886,111.5)"><path d="M-10.5 0.5 h11.5 v-11 h9.5 v21.5 h-21z" fill="url(#xh)" stroke="#6b6b6b" stroke-width="1"/></g><g transform="translate(922,111.5)"><rect x="-11" y="-11" width="22" height="22" rx="1.5" fill="#f3dc32" stroke="#8f8417" stroke-width="1"/><path d="M-10 -2 L-1 -11 M-10 3 L4 -11 M-10 8 L9 -11 M-6 11 L11 -6 M0 11 L11 0 M6 11 L11 6" stroke="#222" stroke-width="1.3"/><path d="M7 -7 V5 H-8 Z" fill="#62c41c" stroke="#3d8c0d" stroke-width="0.6"/><path d="M4.5 -1.5 V2.5 H0.5Z" fill="#f3dc32"/><rect x="-10" y="4" width="19" height="3.2" fill="#62c41c" stroke="#3d8c0d" stroke-width="0.5"/></g><g transform="translate(958,111.5)"><rect x="-11.0" y="-8.5" width="22" height="17" fill="url(#gpage)" stroke="#7d7d7d" stroke-width="1.3"/><rect x="1" y="2" width="8" height="4" fill="#bbb" stroke="#777" stroke-width="0.7"/><circle cx="-4.5" cy="-2.5" r="3.6" fill="#f0cf1c" stroke="#9d8506" stroke-width="0.7"/><path d="M-6.3 11 v-5.5 h-2.4 l4.2 -4.5 l4.2 4.5 h-2.4 v5.5z" fill="#84d12a" stroke="#3f8a0c" stroke-width="0.7"/></g><g transform="translate(994,111.5)"><rect x="-11" y="-8.5" width="22" height="17" fill="#f4f4f4" stroke="#6d6d6d" stroke-width="1"/><rect x="-9" y="-6.5" width="18" height="13" fill="#6f9fe0"/><path d="M-9 1 C-5 -3 -2 -1 1 1.5 C4 3 6 0 9 -1.5 V6.5 H-9Z" fill="#62c41c"/><circle cx="5.5" cy="-3.5" r="1.8" fill="#f7e23b"/></g><g transform="translate(1030,111.5)"><rect x="-11.0" y="-8.5" width="22" height="17" fill="url(#gpage)" stroke="#7d7d7d" stroke-width="1.3"/><circle cx="0" cy="0" r="6.8" fill="none" stroke="#c8161d" stroke-width="2.3"/><path d="M-4.76 -4.76 L4.76 4.76" stroke="#c8161d" stroke-width="2.3"/></g></svg>
<div class="t" style="left:532px;top:64px;color:#1e1e1e">TechDraw</div>

<div class="t" style="left:2px;top:136px">Combo View</div>
<div class="tab" style="left:52px;top:161px;width:47px;height:27px"></div>
<div class="tab on" style="left:1px;top:158px;width:50px;height:31px;border-bottom:none"></div>
<div class="t" style="left:8px;top:163px">Model</div>
<div class="t" style="left:60px;top:164px">Tasks</div>
<div class="abs" style="left:1px;top:188px;width:327px;height:559px;border:1px solid #a9a9a9;border-top-color:#a9a9a9;background:#ebebeb"></div>
<div class="abs" style="left:2px;top:188px;width:48px;height:2px;background:#e1e1e1"></div>
<div class="abs" style="left:2px;top:188px;width:325px;height:253px;border:1px solid #9e9e9e;background:#f3f3f3"></div>
<div class="abs" style="left:3px;top:189px;width:309px;height:25px;background:#d3d3d3"></div>
<div class="abs" style="left:3px;top:189px;width:159px;height:25px;background:linear-gradient(#f4f4f4,#dddddd);border-right:1px solid #b3b3b3;border-bottom:1px solid #b9b9b9"></div>
<div class="t" style="left:8px;top:193px">Labels &amp; Attributes</div>
<div class="abs" style="left:3px;top:404px;width:159px;height:19px;background:#90a870"></div>
<div class="t" style="left:68px;top:214.8px;color:#1f1f1f">Stairs001</div>
<div class="t" style="left:68px;top:233.8px;color:#1f1f1f">Stairs002</div>
<div class="t" style="left:68px;top:252.8px;color:#1f1f1f">Stairs003</div>
<div class="t" style="left:88px;top:271.8px;color:#1f1f1f">Line001</div>
<div class="t" style="left:68px;top:290.8px;color:#1f1f1f">Dimension</div>
<div class="t" style="left:68px;top:309.8px;color:#1f1f1f">Dimension001</div>
<div class="t" style="left:68px;top:328.8px;color:#1f1f1f">Page</div>
<div class="t" style="left:88px;top:347.8px;color:#1f1f1f">Template</div>
<div class="t" style="left:88px;top:366.8px;color:#1f1f1f">DraftView</div>
<div class="t" style="left:88px;top:385.8px;color:#1f1f1f">View</div>
<div class="t" style="left:88px;top:404.8px;color:#fff">View001</div>
<div class="t" style="left:88px;top:423.8px;color:#1f1f1f">Section A - A</div>
<div class="abs" style="left:3px;top:450px;width:323px;height:266px;border:1px solid #9e9e9e;background:#f3f3f3"></div>
<div class="abs" style="left:4px;top:451px;width:306px;height:24px;background:linear-gradient(#f4f4f4,#dddddd);border-bottom:1px solid #b9b9b9"></div>
<div class="abs" style="left:104px;top:451px;width:1px;height:24px;background:#b9b9b9"></div>
<div class="t" style="left:9px;top:455px">Property</div>
<div class="t" style="left:109px;top:455px">Value</div>
<div class="abs" style="left:4px;top:476px;width:306px;height:22px;background:#b1b1b1"></div>
<div class="t" style="left:28px;top:479px;color:#fff;font-weight:bold">Base</div>
<div class="abs" style="left:4px;top:498px;width:306px;height:22px;background:#e3e3e3"></div>
<div class="abs" style="left:25px;top:519px;width:285px;height:1px;background:#c6c6c6"></div>
<div class="abs" style="left:104px;top:498px;width:1px;height:22px;background:#c6c6c6"></div>
<div class="t" style="left:28px;top:501px;color:#1f1f1f">X</div>
<div class="t" style="left:108px;top:501px">320.58</div>
<div class="abs" style="left:4px;top:520px;width:306px;height:22px;background:#f3f3f3"></div>
<div class="abs" style="left:25px;top:541px;width:285px;height:1px;background:#c6c6c6"></div>
<div class="abs" style="left:104px;top:520px;width:1px;height:22px;background:#c6c6c6"></div>
<div class="t" style="left:28px;top:523px;color:#1f1f1f">Y</div>
<div class="t" style="left:108px;top:523px">77.10</div>
<div class="abs" style="left:4px;top:542px;width:306px;height:22px;background:#e3e3e3"></div>
<div class="abs" style="left:25px;top:563px;width:285px;height:1px;background:#c6c6c6"></div>
<div class="abs" style="left:104px;top:542px;width:1px;height:22px;background:#c6c6c6"></div>
<div class="t" style="left:28px;top:545px;color:#1f1f1f">Lock Positi…</div>
<div class="t" style="left:108px;top:545px">false</div>
<div class="abs" style="left:4px;top:564px;width:306px;height:22px;background:#f3f3f3"></div>
<div class="abs" style="left:25px;top:585px;width:285px;height:1px;background:#c6c6c6"></div>
<div class="abs" style="left:104px;top:564px;width:1px;height:22px;background:#c6c6c6"></div>
<div class="t" style="left:28px;top:567px;color:#1f1f1f">Rotation</div>
<div class="t" style="left:108px;top:567px">0.00</div>
<div class="abs" style="left:4px;top:586px;width:306px;height:22px;background:#e3e3e3"></div>
<div class="abs" style="left:25px;top:607px;width:285px;height:1px;background:#c6c6c6"></div>
<div class="abs" style="left:104px;top:586px;width:1px;height:22px;background:#c6c6c6"></div>
<div class="t" style="left:28px;top:589px;color:#1f1f1f">Scale Type</div>
<div class="t" style="left:108px;top:589px">Page</div>
<div class="abs" style="left:4px;top:608px;width:306px;height:22px;background:#f3f3f3"></div>
<div class="abs" style="left:25px;top:629px;width:285px;height:1px;background:#c6c6c6"></div>
<div class="abs" style="left:104px;top:608px;width:1px;height:22px;background:#c6c6c6"></div>
<div class="abs" style="left:4px;top:608px;width:100px;height:21px;background:#90a870"></div>
<div class="abs" style="left:105px;top:608px;width:205px;height:21px;background:#f7f7f7"></div>
<div class="t" style="left:28px;top:611px;color:#fff">Scale</div>
<div class="t" style="left:109px;top:611px">0.04</div>
<div class="abs" style="left:4px;top:630px;width:306px;height:22px;background:#e3e3e3"></div>
<div class="abs" style="left:25px;top:651px;width:285px;height:1px;background:#c6c6c6"></div>
<div class="abs" style="left:104px;top:630px;width:1px;height:22px;background:#c6c6c6"></div>
<div class="t" style="left:28px;top:633px;color:#1f1f1f">Caption</div>
<div class="abs" style="left:4px;top:652px;width:306px;height:22px;background:#f3f3f3"></div>
<div class="abs" style="left:25px;top:673px;width:285px;height:1px;background:#c6c6c6"></div>
<div class="abs" style="left:104px;top:652px;width:1px;height:22px;background:#c6c6c6"></div>
<div class="t" style="left:28px;top:655px;color:#1f1f1f">Label</div>
<div class="t" style="left:108px;top:655px">View001</div>
<div class="abs" style="left:4px;top:674px;width:306px;height:22px;background:#b1b1b1"></div>
<div class="t" style="left:28px;top:677px;color:#fff;font-weight:bold">HLR&nbsp; Parameters</div>
<div class="abs" style="left:4px;top:696px;width:306px;height:19px;background:#f3f3f3"></div>
<div class="abs" style="left:25px;top:714px;width:285px;height:1px;background:#c6c6c6"></div>
<div class="abs" style="left:104px;top:696px;width:1px;height:19px;background:#c6c6c6"></div>
<div class="t" style="left:28px;top:699px;color:#1f1f1f">Coarse View</div>
<div class="t" style="left:108px;top:699px">false</div>
<div class="tab" style="left:4px;top:716px;width:41px;height:26px;border-radius:0 0 3px 3px;border-top:none;background:linear-gradient(#d3d3d3,#dedede)"></div>
<div class="tab on" style="left:48px;top:715px;width:39px;height:30px;border-radius:0 0 3px 3px;border-top:none;background:linear-gradient(#ececec,#e2e2e2)"></div>
<div class="t" style="left:10px;top:722px">View</div>
<div class="t" style="left:54px;top:723px">Data</div>
<div class="tab" style="left:89px;top:749px;width:96px;height:25px;border-radius:0 0 3px 3px;background:linear-gradient(#d3d3d3,#dedede)"></div>
<div class="tab on" style="left:1px;top:749px;width:85px;height:28px;border-radius:0 0 3px 3px;background:linear-gradient(#e6e6e6,#dedede)"></div>
<div class="t" style="left:9px;top:755px">Combo View</div>
<div class="t" style="left:96px;top:754px">Selection view</div>
<svg style="left:0;top:133px" width="336" height="650"><defs>
<linearGradient id="gtrack" x1="0" y1="0" x2="1" y2="0"><stop offset="0" stop-color="#cfcfcf"/><stop offset="0.35" stop-color="#e4e4e4"/><stop offset="1" stop-color="#f1f1f1"/></linearGradient>
<linearGradient id="ghandle" x1="0" y1="0" x2="1" y2="0"><stop offset="0" stop-color="#e6e6e6"/><stop offset="1" stop-color="#d2d2d2"/></linearGradient>
<linearGradient id="gtrackh" x1="0" y1="0" x2="0" y2="1"><stop offset="0" stop-color="#cfcfcf"/><stop offset="0.35" stop-color="#e4e4e4"/><stop offset="1" stop-color="#f1f1f1"/></linearGradient>
<linearGradient id="ghandleh" x1="0" y1="0" x2="0" y2="1"><stop offset="0" stop-color="#e6e6e6"/><stop offset="1" stop-color="#d2d2d2"/></linearGradient>
</defs><defs><linearGradient id="gpg" x1="0" y1="0" x2="1" y2="1"><stop offset="0" stop-color="#fbfbfb"/><stop offset="1" stop-color="#cfcfcf"/></linearGradient></defs><rect x="298.2" y="6.2" width="10.6" height="10.6" rx="2" fill="none" stroke="#666" stroke-width="1.1"/><rect x="315.2" y="6.2" width="10.6" height="10.6" rx="2" fill="none" stroke="#666" stroke-width="1.1"/><rect x="302.3" y="8.2" width="4.5" height="4.5" rx="0.8" fill="none" stroke="#6e6e6e" stroke-width="1"/><rect x="300.2" y="10.3" width="4.5" height="4.5" rx="0.8" fill="#d6d6d6" stroke="#6e6e6e" stroke-width="1"/><path d="M317.7 8.7 l5.6 5.6 M323.3 8.7 l-5.6 5.6" stroke="#5c5c5c" stroke-width="1.9"/><g transform="translate(54,90.30000000000001)"><polygon points="-7.8,3.2 -0.5,0.8 5.2,1.8 5.0,4.0 -2.2,6.6 -7.8,5.4" fill="#f2f2f2" stroke="#858585" stroke-width="0.9" stroke-linejoin="round"/><polyline points="-7.8,3.2 -2.2,4.4 5.2,1.8" fill="none" stroke="#9a9a9a" stroke-width="0.8"/><polygon points="-4.8,-0.7 2.5,-3.1 8.2,-2.1 8.0,0.1 0.8,2.7 -4.8,1.5" fill="#f2f2f2" stroke="#858585" stroke-width="0.9" stroke-linejoin="round"/><polyline points="-4.8,-0.7 0.8,0.5 8.2,-2.1" fill="none" stroke="#9a9a9a" stroke-width="0.8"/><polygon points="-1.8,-4.6 5.5,-7.0 11.2,-6.0 11.0,-3.8 3.8,-1.2 -1.8,-2.4" fill="#f2f2f2" stroke="#858585" stroke-width="0.9" stroke-linejoin="round"/><polyline points="-1.8,-4.6 3.8,-3.4 11.2,-6.0" fill="none" stroke="#9a9a9a" stroke-width="0.8"/></g><g transform="translate(54,109.30000000000001)"><polygon points="-7.8,3.2 -0.5,0.8 5.2,1.8 5.0,4.0 -2.2,6.6 -7.8,5.4" fill="#f2f2f2" stroke="#858585" stroke-width="0.9" stroke-linejoin="round"/><polyline points="-7.8,3.2 -2.2,4.4 5.2,1.8" fill="none" stroke="#9a9a9a" stroke-width="0.8"/><polygon points="-4.8,-0.7 2.5,-3.1 8.2,-2.1 8.0,0.1 0.8,2.7 -4.8,1.5" fill="#f2f2f2" stroke="#858585" stroke-width="0.9" stroke-linejoin="round"/><polyline points="-4.8,-0.7 0.8,0.5 8.2,-2.1" fill="none" stroke="#9a9a9a" stroke-width="0.8"/><polygon points="-1.8,-4.6 5.5,-7.0 11.2,-6.0 11.0,-3.8 3.8,-1.2 -1.8,-2.4" fill="#f2f2f2" stroke="#858585" stroke-width="0.9" stroke-linejoin="round"/><polyline points="-1.8,-4.6 3.8,-3.4 11.2,-6.0" fill="none" stroke="#9a9a9a" stroke-width="0.8"/></g><g transform="translate(54,128.3)"><polygon points="-7.8,3.2 -0.5,0.8 5.2,1.8 5.0,4.0 -2.2,6.6 -7.8,5.4" fill="#f2f2f2" stroke="#858585" stroke-width="0.9" stroke-linejoin="round"/><polyline points="-7.8,3.2 -2.2,4.4 5.2,1.8" fill="none" stroke="#9a9a9a" stroke-width="0.8"/><polygon points="-4.8,-0.7 2.5,-3.1 8.2,-2.1 8.0,0.1 0.8,2.7 -4.8,1.5" fill="#f2f2f2" stroke="#858585" stroke-width="0.9" stroke-linejoin="round"/><polyline points="-4.8,-0.7 0.8,0.5 8.2,-2.1" fill="none" stroke="#9a9a9a" stroke-width="0.8"/><polygon points="-1.8,-4.6 5.5,-7.0 11.2,-6.0 11.0,-3.8 3.8,-1.2 -1.8,-2.4" fill="#f2f2f2" stroke="#858585" stroke-width="0.9" stroke-linejoin="round"/><polyline points="-1.8,-4.6 3.8,-3.4 11.2,-6.0" fill="none" stroke="#9a9a9a" stroke-width="0.8"/></g><path d="M31.0 126.30000000000001 h9 l-4.5 5z" fill="#1a1a1a"/><g transform="translate(74,147.3)"><circle cx="2" cy="-2.5" r="4.6" fill="#eef0f4" stroke="#2b3f5c" stroke-width="1.5"/><rect x="-6.5" y="-1.5" width="8" height="8" rx="1" fill="#eef0f4" stroke="#2b3f5c" stroke-width="1.5"/></g><g transform="translate(54,166.3)"><path d="M-8 0 L-2.5 -5 V5Z" fill="#f5ea20" stroke="#222" stroke-width="0.9"/><path d="M8 0 L2.5 -5 V5Z" fill="#f5ea20" stroke="#222" stroke-width="0.9"/><rect x="-0.8" y="-0.8" width="1.6" height="1.6" fill="#222"/></g><g transform="translate(54,185.3)"><path d="M-8 0 L-2.5 -5 V5Z" fill="#f5ea20" stroke="#222" stroke-width="0.9"/><path d="M8 0 L2.5 -5 V5Z" fill="#f5ea20" stroke="#222" stroke-width="0.9"/><rect x="-0.8" y="-0.8" width="1.6" height="1.6" fill="#222"/></g><g transform="translate(54,204.3)"><rect x="-5.5" y="-7" width="11" height="14" rx="0.8" fill="url(#gpg)" stroke="#8c8c8c" stroke-width="1"/></g><path d="M31.0 202.3 h9 l-4.5 5z" fill="#1a1a1a"/><g transform="translate(74,223.3)"><rect x="-7.5" y="-6.5" width="15" height="13" rx="1" fill="#f3f3f1" stroke="#6f6f6f" stroke-width="1.2"/><rect x="-5.5" y="-4.5" width="11" height="9" fill="none" stroke="#bbb" stroke-width="0.7"/><rect x="-1" y="2" width="6" height="2" fill="#666"/></g><g transform="translate(74,242.3)"><rect x="-7.5" y="-5" width="13" height="11.5" fill="#e4e4e0" stroke="#6f6f6f" stroke-width="1.2"/><circle cx="0" cy="-0.5" r="2.8" fill="none" stroke="#3a64b0" stroke-width="1.2"/><rect x="-4.5" y="0" width="4.5" height="4" fill="#7d9ad0" stroke="#3a64b0" stroke-width="1"/><circle cx="4.5" cy="-5.5" r="2.8" fill="#1f33e0"/><path d="M2.9 -5.5 l1.2 1.4 l2 -2.8" fill="none" stroke="#fff" stroke-width="0.9"/></g><g transform="translate(74,261.3)"><rect x="-7.500" y="-5.500" width="13" height="12.500" fill="#e8e8e4" stroke="#3a3a3a" stroke-width="1.100" stroke-dasharray="2 1.5"/><rect x="-4.500" y="-1.500" width="7" height="6" rx="0.800" fill="#d8d8d8" stroke="#888" stroke-width="0.800"/><circle cx="0.500" cy="1.500" r="1.600" fill="#f4f4f4" stroke="#888" stroke-width="0.700"/><circle cx="4.5" cy="-5.5" r="2.8" fill="#1f33e0"/><path d="M2.9 -5.5 l1.2 1.4 l2 -2.8" fill="none" stroke="#fff" stroke-width="0.9"/></g><path d="M52.5 256.8 v9 l5 -4.5z" fill="#1a1a1a"/><g transform="translate(74,280.3)"><rect x="-7.500" y="-5.500" width="13" height="12.500" fill="#e8e8e4" stroke="#3a3a3a" stroke-width="1.100" stroke-dasharray="2 1.5"/><rect x="-4.500" y="-1.500" width="7" height="6" rx="0.800" fill="#d8d8d8" stroke="#888" stroke-width="0.800"/><circle cx="0.500" cy="1.500" r="1.600" fill="#f4f4f4" stroke="#888" stroke-width="0.700"/><circle cx="4.5" cy="-5.5" r="2.8" fill="#1f33e0"/><path d="M2.9 -5.5 l1.2 1.4 l2 -2.8" fill="none" stroke="#fff" stroke-width="0.9"/></g><path d="M52.5 275.8 v9 l5 -4.5z" fill="#1a1a1a"/><g transform="translate(74,299.3)"><rect x="-7.5" y="-5.5" width="13" height="12.5" fill="#e8e8e4" stroke="#3a3a3a" stroke-width="1.1" stroke-dasharray="2 1.5"/><path d="M-5 4.5 L-4 -0.5 L1 -1.5 L3 1 L1.5 4.5Z" fill="#9a9a9a" stroke="#666" stroke-width="0.7"/><circle cx="4.5" cy="-5.5" r="2.8" fill="#1f33e0"/><path d="M2.9 -5.5 l1.2 1.4 l2 -2.8" fill="none" stroke="#fff" stroke-width="0.9"/></g><rect x="312.5" y="56" width="14" height="251" fill="url(#gtrack)"/><rect x="312.5" y="56" width="14" height="14" fill="#dadada"/><rect x="312.5" y="293" width="14" height="14" fill="#dadada"/><path d="M316.1 65.3 l3.4 -4.4 l3.4 4.4z" fill="#222"/><path d="M316.1 297.7 l3.4 4.4 l3.4 -4.4z" fill="#222"/><rect x="315.0" y="125.0" width="9" height="139.0" rx="4.5" fill="url(#ghandle)" stroke="#a3a3a3" stroke-width="1"/><rect x="152.0" y="311.5" width="1.5" height="1.5" fill="#8f8f8f"/><rect x="157.5" y="311.5" width="1.5" height="1.5" fill="#8f8f8f"/><rect x="163.0" y="311.5" width="1.5" height="1.5" fill="#8f8f8f"/><rect x="168.5" y="311.5" width="1.5" height="1.5" fill="#8f8f8f"/><rect x="174.0" y="311.5" width="1.5" height="1.5" fill="#8f8f8f"/><rect x="331" y="314.0" width="1.5" height="1.5" fill="#8f8f8f"/><rect x="331" y="319.5" width="1.5" height="1.5" fill="#8f8f8f"/><rect x="331" y="325.0" width="1.5" height="1.5" fill="#8f8f8f"/><rect x="331" y="330.5" width="1.5" height="1.5" fill="#8f8f8f"/><circle cx="287.5" cy="483" r="6" fill="#dfe6f2" stroke="#3d67a8" stroke-width="1.2"/><text x="283.3" y="485.29999999999995" font-family="Liberation Serif" font-style="italic" font-size="7.5" fill="#2d55a0">f(x)</text><path d="M301.5 481.5 l2.5 -3.500 l2.5 3.500z" fill="#222"/><path d="M301.5 489 l2.5 3.500 l2.5 -3.500z" fill="#222"/><rect x="310.5" y="318" width="14" height="264" fill="url(#gtrack)"/><rect x="310.5" y="318" width="14" height="14" fill="#dadada"/><rect x="310.5" y="568" width="14" height="14" fill="#dadada"/><path d="M314.1 327.3 l3.4 -4.4 l3.4 4.4z" fill="#9a9a9a"/><path d="M314.1 572.7 l3.4 4.4 l3.4 -4.4z" fill="#222"/><rect x="313.0" y="334.0" width="9" height="94.0" rx="4.5" fill="url(#ghandle)" stroke="#a3a3a3" stroke-width="1"/></svg>
<div class="abs" style="left:335px;top:132px;width:786px;height:615px;background:#e9e9e9;border:1px solid #8e8e8e;border-radius:7px 7px 0 0"></div>
<div class="abs" style="left:336px;top:133px;width:784px;height:23px;border-radius:6px 6px 0 0;background:linear-gradient(#b4d196 0,#a9c98a 40%,#98b57c 55%,#9ab87e 100%);border-bottom:1px solid #6f8a58"></div>
<div class="abs" style="left:336px;top:156px;width:3px;height:590px;background:linear-gradient(90deg,#bdbdbd,#f4f4f4 60%,#e0e0e0)"></div>
<div class="abs" style="left:1117px;top:156px;width:4px;height:590px;background:linear-gradient(90deg,#f2f2f2,#c9c9c9 60%,#9a9a9a)"></div>
<div class="t" style="left:667px;top:136px;color:#fff;font-weight:bold;text-shadow:0 1px 1px #4a5a3a,0 0 1px #55663f">Unnamed : 1*</div>
<svg style="left:0;top:0" width="1130" height="160"><text x="339.5" y="152.3" font-family="Liberation Sans" font-weight="bold" font-size="23" fill="#d8141c" stroke="#8e0a10" stroke-width="0.5" textLength="10.5" lengthAdjust="spacingAndGlyphs">F</text><g transform="translate(351,146)"><circle r="3.6" fill="none" stroke="#3f73c4" stroke-width="2.6"/><circle r="4.6" fill="none" stroke="#3f73c4" stroke-width="2.2" stroke-dasharray="1.8 1.8"/></g><rect x="1057.5" y="135.5" width="17" height="17" rx="4" fill="none" stroke="#6f8a58" stroke-width="1"/><rect x="1077.5" y="135.5" width="17" height="17" rx="4" fill="none" stroke="#6f8a58" stroke-width="1"/><rect x="1097.5" y="135.5" width="17" height="17" rx="4" fill="none" stroke="#6f8a58" stroke-width="1"/><path d="M1062 147 h8" stroke="#fff" stroke-width="2.2"/><rect x="1082.5" y="140.500" width="7" height="7" fill="none" stroke="#fff" stroke-width="1.6"/><path d="M1102.5 140.5 l7 7 M1109.5 140.5 l-7 7" stroke="#fff" stroke-width="2.4"/></svg>
<svg style="left:339px;top:156px;overflow:hidden;background:linear-gradient(#30364d,#6c859f)" width="778" height="590" viewBox="339 156 778 590"><polygon points="398.6,225.4 415.7,222.7 479.7,312.2 462.6,314.9" fill="#969696" stroke="#000" stroke-width="1.3" stroke-linejoin="round" /><polygon points="381.5,255.6 398.6,252.9 462.6,342.4 445.5,345.1" fill="#969696" stroke="#000" stroke-width="1.3" stroke-linejoin="round" /><polygon points="364.4,285.8 381.5,283.1 445.5,372.6 428.4,375.3" fill="#969696" stroke="#000" stroke-width="1.3" stroke-linejoin="round" /><polygon points="347.3,316.0 364.4,313.3 428.4,402.8 411.3,405.5" fill="#969696" stroke="#000" stroke-width="1.3" stroke-linejoin="round" /><polygon points="330.2,346.2 347.3,343.5 411.3,433.0 394.2,435.7" fill="#969696" stroke="#000" stroke-width="1.3" stroke-linejoin="round" /><polygon points="313.1,376.4 330.2,373.7 394.2,463.2 377.1,465.9" fill="#969696" stroke="#000" stroke-width="1.3" stroke-linejoin="round" /><polygon points="458.5,161.0 489.7,152.0 1020.0,152.0 1000.0,156.0 523.1,249.9" fill="#969696" stroke="#000" stroke-width="1.7" stroke-linejoin="round" /><polygon points="416.0,195.3 420.4,194.6 420.4,201.5 418.6,201.2" fill="#e4e4e4" stroke="#000" stroke-width="1" stroke-linejoin="round" /><polygon points="420.5,180.0 459.8,234.0 459.8,270.6 420.5,220.3" fill="#5c5c5c" stroke="#000" stroke-width="1.7" stroke-linejoin="round" /><polygon points="459.8,234.0 473.2,249.8 505.4,244.2 777.0,377.9 764.0,388.0 730.4,392.7 709.5,396.2 459.8,271.0" fill="#d6d6d6" stroke="#000" stroke-width="1.7" stroke-linejoin="round" /><polygon points="834.2,482.0 1002.3,458.0 1002.3,475.0 884.6,497.8 834.2,541.7" fill="#d6d6d6" stroke="#000" stroke-width="1.7" stroke-linejoin="round" /><polygon points="834.2,482.0 795.3,514.4 558.9,721.4 558.9,742.6 617.7,730.3 834.2,541.7" fill="#d6d6d6" stroke="#000" stroke-width="1.7" stroke-linejoin="round" /><line x1="834.2" y1="485.5" x2="834.2" y2="541.7" stroke="#000" stroke-width="1.7" stroke-linecap="round"/><polygon points="730.4,392.7 764.6,387.0 834.2,484.0 834.2,502.0 790.0,500.0 754.1,433.6 730.4,400.3" fill="#5c5c5c" stroke="#000" stroke-width="1.7" stroke-linejoin="round" /><polygon points="843.7,493.1 1015.6,459.3 1015.6,463.1 844.7,496.7" fill="#e9e9e9" stroke="#000" stroke-width="1.1" stroke-linejoin="round" /><polygon points="713.6,314.2 885.5,280.4 1015.6,459.3 843.7,493.1" fill="#969696" stroke="#000" stroke-width="1.7" stroke-linejoin="round" /><polygon points="745.4,359.7 910.0,327.0 973.8,416.1 809.2,448.8" fill="#74778a"/><line x1="744.4" y1="360.2" x2="808.2" y2="449.3" stroke="#33354c" stroke-width="2.4" stroke-linecap="round"/><line x1="745.4" y1="359.7" x2="809.2" y2="448.8" stroke="#474a72" stroke-width="0.9" stroke-linecap="round"/><line x1="745.4" y1="359.7" x2="910.0" y2="327.0" stroke="#474a72" stroke-width="0.9" stroke-linecap="round"/><line x1="761.9" y1="356.4" x2="825.7" y2="445.5" stroke="#5d6080" stroke-width="0.6" stroke-linecap="round"/><line x1="751.8" y1="368.6" x2="916.4" y2="335.9" stroke="#5d6080" stroke-width="0.6" stroke-linecap="round"/><line x1="778.3" y1="353.2" x2="842.1" y2="442.3" stroke="#5d6080" stroke-width="0.6" stroke-linecap="round"/><line x1="758.2" y1="377.5" x2="922.8" y2="344.8" stroke="#5d6080" stroke-width="0.6" stroke-linecap="round"/><line x1="794.8" y1="349.9" x2="858.6" y2="439.0" stroke="#5d6080" stroke-width="0.6" stroke-linecap="round"/><line x1="764.5" y1="386.4" x2="929.1" y2="353.7" stroke="#5d6080" stroke-width="0.6" stroke-linecap="round"/><line x1="811.2" y1="346.6" x2="875.0" y2="435.7" stroke="#5d6080" stroke-width="0.6" stroke-linecap="round"/><line x1="770.9" y1="395.3" x2="935.5" y2="362.6" stroke="#5d6080" stroke-width="0.6" stroke-linecap="round"/><line x1="827.7" y1="343.4" x2="891.5" y2="432.5" stroke="#474a72" stroke-width="0.9" stroke-linecap="round"/><line x1="777.3" y1="404.2" x2="941.9" y2="371.6" stroke="#474a72" stroke-width="0.9" stroke-linecap="round"/><line x1="844.2" y1="340.1" x2="908.0" y2="429.2" stroke="#5d6080" stroke-width="0.6" stroke-linecap="round"/><line x1="783.7" y1="413.2" x2="948.3" y2="380.5" stroke="#5d6080" stroke-width="0.6" stroke-linecap="round"/><line x1="860.6" y1="336.8" x2="924.4" y2="425.9" stroke="#5d6080" stroke-width="0.6" stroke-linecap="round"/><line x1="790.1" y1="422.1" x2="954.7" y2="389.4" stroke="#5d6080" stroke-width="0.6" stroke-linecap="round"/><line x1="877.1" y1="333.5" x2="940.9" y2="422.6" stroke="#5d6080" stroke-width="0.6" stroke-linecap="round"/><line x1="796.4" y1="431.0" x2="961.0" y2="398.3" stroke="#5d6080" stroke-width="0.6" stroke-linecap="round"/><line x1="893.5" y1="330.3" x2="957.3" y2="419.4" stroke="#5d6080" stroke-width="0.6" stroke-linecap="round"/><line x1="802.8" y1="439.9" x2="967.4" y2="407.2" stroke="#5d6080" stroke-width="0.6" stroke-linecap="round"/><line x1="910.0" y1="327.0" x2="973.8" y2="416.1" stroke="#474a72" stroke-width="0.9" stroke-linecap="round"/><line x1="809.2" y1="448.8" x2="973.8" y2="416.1" stroke="#474a72" stroke-width="0.9" stroke-linecap="round"/><polygon points="744.8,383.5 787.8,376.0 788.8,379.4 745.8,386.9" fill="#dedede" stroke="#000" stroke-width="1.6" stroke-linejoin="round" /><polygon points="679.5,293.7 722.5,286.2 787.8,376.0 744.8,383.5" fill="#969696" stroke="#000" stroke-width="1.7" stroke-linejoin="round" /><line x1="680.2" y1="294.5" x2="745.8" y2="386.3" stroke="#000" stroke-width="2.8" stroke-linecap="round"/><polygon points="706.0,364.4 749.0,356.9 750.0,360.3 707.0,367.8" fill="#dedede" stroke="#000" stroke-width="1.6" stroke-linejoin="round" /><polygon points="640.7,274.6 683.7,267.1 749.0,356.9 706.0,364.4" fill="#969696" stroke="#000" stroke-width="1.7" stroke-linejoin="round" /><line x1="641.4" y1="275.4" x2="707.0" y2="367.2" stroke="#000" stroke-width="2.8" stroke-linecap="round"/><polygon points="667.2,345.3 710.2,337.8 711.2,341.2 668.2,348.7" fill="#dedede" stroke="#000" stroke-width="1.6" stroke-linejoin="round" /><polygon points="601.9,255.5 644.9,248.0 710.2,337.8 667.2,345.3" fill="#969696" stroke="#000" stroke-width="1.7" stroke-linejoin="round" /><line x1="602.6" y1="256.3" x2="668.2" y2="348.1" stroke="#000" stroke-width="2.8" stroke-linecap="round"/><polygon points="628.4,326.2 671.4,318.7 672.4,322.1 629.4,329.6" fill="#dedede" stroke="#000" stroke-width="1.6" stroke-linejoin="round" /><polygon points="563.1,236.4 606.1,228.9 671.4,318.7 628.4,326.2" fill="#969696" stroke="#000" stroke-width="1.7" stroke-linejoin="round" /><line x1="563.8" y1="237.2" x2="629.4" y2="329.0" stroke="#000" stroke-width="2.8" stroke-linecap="round"/><polygon points="589.6,307.1 632.6,299.6 633.6,303.0 590.6,310.5" fill="#dedede" stroke="#000" stroke-width="1.6" stroke-linejoin="round" /><polygon points="524.3,217.3 567.3,209.8 632.6,299.6 589.6,307.1" fill="#969696" stroke="#000" stroke-width="1.7" stroke-linejoin="round" /><line x1="525.0" y1="218.1" x2="590.6" y2="309.9" stroke="#000" stroke-width="2.8" stroke-linecap="round"/><polygon points="550.8,288.0 593.8,280.5 594.8,283.9 551.8,291.4" fill="#dedede" stroke="#000" stroke-width="1.6" stroke-linejoin="round" /><polygon points="485.5,198.2 528.5,190.7 593.8,280.5 550.8,288.0" fill="#969696" stroke="#000" stroke-width="1.7" stroke-linejoin="round" /><line x1="486.2" y1="199.0" x2="551.8" y2="290.8" stroke="#000" stroke-width="2.8" stroke-linecap="round"/><polygon points="512.0,268.9 555.0,261.4 556.0,264.8 513.0,272.3" fill="#dedede" stroke="#000" stroke-width="1.6" stroke-linejoin="round" /><polygon points="446.7,179.1 489.7,171.6 555.0,261.4 512.0,268.9" fill="#969696" stroke="#000" stroke-width="1.7" stroke-linejoin="round" /><line x1="447.4" y1="179.9" x2="513.0" y2="271.7" stroke="#000" stroke-width="2.8" stroke-linecap="round"/><polygon points="472.4,249.6 515.4,242.1 516.4,245.5 473.4,253.0" fill="#dedede" stroke="#000" stroke-width="1.6" stroke-linejoin="round" /><polygon points="408.1,161.8 451.1,154.3 515.4,242.1 472.4,249.6" fill="#969696" stroke="#000" stroke-width="1.7" stroke-linejoin="round" /><line x1="408.8" y1="162.6" x2="473.4" y2="252.4" stroke="#000" stroke-width="2.8" stroke-linecap="round"/><line x1="498.7" y1="250.1" x2="498.7" y2="255.1" stroke="#000" stroke-width="2.0" stroke-linecap="round"/><line x1="537.5" y1="269.2" x2="537.5" y2="274.2" stroke="#000" stroke-width="2.0" stroke-linecap="round"/><line x1="576.3" y1="288.3" x2="576.3" y2="293.3" stroke="#000" stroke-width="2.0" stroke-linecap="round"/><line x1="615.1" y1="307.4" x2="615.1" y2="312.4" stroke="#000" stroke-width="2.0" stroke-linecap="round"/><line x1="653.9" y1="326.5" x2="653.9" y2="331.5" stroke="#000" stroke-width="2.0" stroke-linecap="round"/><line x1="692.7" y1="345.6" x2="692.7" y2="350.6" stroke="#000" stroke-width="2.0" stroke-linecap="round"/><line x1="731.5" y1="364.7" x2="731.5" y2="369.7" stroke="#000" stroke-width="2.0" stroke-linecap="round"/><polygon points="756.3,461.5 795.3,514.4 795.3,533.9 756.3,480.0" fill="#5c5c5c" stroke="#000" stroke-width="1.7" stroke-linejoin="round" /><polygon points="804.8,527.3 847.5,517.5 848.5,520.9 805.8,530.7" fill="#dedede" stroke="#000" stroke-width="1.6" stroke-linejoin="round" /><polygon points="740.2,439.7 782.9,429.9 847.5,517.5 804.8,527.3" fill="#969696" stroke="#000" stroke-width="1.7" stroke-linejoin="round" /><line x1="740.9" y1="440.5" x2="805.8" y2="530.1" stroke="#000" stroke-width="2.8" stroke-linecap="round"/><polygon points="716.9,496.0 755.9,548.9 755.9,568.4 716.9,514.5" fill="#5c5c5c" stroke="#000" stroke-width="1.7" stroke-linejoin="round" /><polygon points="765.4,561.8 808.1,552.0 809.1,555.4 766.4,565.2" fill="#dedede" stroke="#000" stroke-width="1.6" stroke-linejoin="round" /><polygon points="700.8,474.2 743.5,464.4 808.1,552.0 765.4,561.8" fill="#969696" stroke="#000" stroke-width="1.7" stroke-linejoin="round" /><line x1="701.5" y1="475.0" x2="766.4" y2="564.6" stroke="#000" stroke-width="2.8" stroke-linecap="round"/><polygon points="677.5,530.5 716.5,583.4 716.5,602.9 677.5,549.0" fill="#5c5c5c" stroke="#000" stroke-width="1.7" stroke-linejoin="round" /><polygon points="726.0,596.3 768.7,586.5 769.7,589.9 727.0,599.7" fill="#dedede" stroke="#000" stroke-width="1.6" stroke-linejoin="round" /><polygon points="661.4,508.7 704.1,498.9 768.7,586.5 726.0,596.3" fill="#969696" stroke="#000" stroke-width="1.7" stroke-linejoin="round" /><line x1="662.1" y1="509.5" x2="727.0" y2="599.1" stroke="#000" stroke-width="2.8" stroke-linecap="round"/><polygon points="638.1,565.0 677.1,617.9 677.1,637.4 638.1,583.5" fill="#5c5c5c" stroke="#000" stroke-width="1.7" stroke-linejoin="round" /><polygon points="686.6,630.8 729.3,621.0 730.3,624.4 687.6,634.2" fill="#dedede" stroke="#000" stroke-width="1.6" stroke-linejoin="round" /><polygon points="622.0,543.2 664.7,533.4 729.3,621.0 686.6,630.8" fill="#969696" stroke="#000" stroke-width="1.7" stroke-linejoin="round" /><line x1="622.7" y1="544.0" x2="687.6" y2="633.6" stroke="#000" stroke-width="2.8" stroke-linecap="round"/><polygon points="598.7,599.5 637.7,652.4 637.7,671.9 598.7,618.0" fill="#5c5c5c" stroke="#000" stroke-width="1.7" stroke-linejoin="round" /><polygon points="647.2,665.3 689.9,655.5 690.9,658.9 648.2,668.7" fill="#dedede" stroke="#000" stroke-width="1.6" stroke-linejoin="round" /><polygon points="582.6,577.7 625.3,567.9 689.9,655.5 647.2,665.3" fill="#969696" stroke="#000" stroke-width="1.7" stroke-linejoin="round" /><line x1="583.3" y1="578.5" x2="648.2" y2="668.1" stroke="#000" stroke-width="2.8" stroke-linecap="round"/><polygon points="559.3,634.0 598.3,686.9 598.3,706.4 559.3,652.5" fill="#5c5c5c" stroke="#000" stroke-width="1.7" stroke-linejoin="round" /><polygon points="607.8,699.8 650.5,690.0 651.5,693.4 608.8,703.2" fill="#dedede" stroke="#000" stroke-width="1.6" stroke-linejoin="round" /><polygon points="543.2,612.2 585.9,602.4 650.5,690.0 607.8,699.8" fill="#969696" stroke="#000" stroke-width="1.7" stroke-linejoin="round" /><line x1="543.9" y1="613.0" x2="608.8" y2="702.6" stroke="#000" stroke-width="2.8" stroke-linecap="round"/><polygon points="519.9,668.5 558.9,721.4 558.9,740.9 519.9,687.0" fill="#5c5c5c" stroke="#000" stroke-width="1.7" stroke-linejoin="round" /><polygon points="568.4,734.3 611.1,724.5 612.1,727.9 569.4,737.7" fill="#dedede" stroke="#000" stroke-width="1.6" stroke-linejoin="round" /><polygon points="503.8,646.7 546.5,636.9 611.1,724.5 568.4,734.3" fill="#969696" stroke="#000" stroke-width="1.7" stroke-linejoin="round" /><line x1="504.5" y1="647.5" x2="569.4" y2="737.1" stroke="#000" stroke-width="2.8" stroke-linecap="round"/><line x1="706.6" y1="271.6" x2="858.3" y2="242.5" stroke="#fff" stroke-width="1.6" stroke-linecap="round"/><line x1="951.9" y1="267.4" x2="1017.3" y2="356.4" stroke="#fff" stroke-width="1.6" stroke-linecap="round"/><text transform="translate(763,266.5) rotate(-11)" font-family="Liberation Sans" font-size="9" fill="#a9adb8" letter-spacing="1.5" opacity="0.6">⸨⸨ ⸨⸩⸨⸩</text><text transform="translate(979,301) rotate(54)" font-family="Liberation Sans" font-size="9" fill="#a9adb8" letter-spacing="1" opacity="0.6">⸨⸩⸩ ⸩</text><polygon points="1025.5,173.1 1034,163.7 1042.6,173.1" fill="#dfe6ef"/><polygon points="1025.5,304.7 1042.6,304.7 1034,314.1" fill="#dfe6ef"/><polygon points="958.8,238.9 968.2,230.4 968.2,248.3" fill="#dfe6ef"/><polygon points="1099.8,230.4 1109.2,239.2 1099.8,248.3" fill="#dfe6ef"/><path d="M1012.5 174.5 Q994 180 985.500 192.500" fill="none" stroke="#dfe6ef" stroke-width="6.2"/><polygon points="979.8,196.800 980.5,184.500 992.5,194.500" fill="#dfe6ef"/><path d="M1056.3 174.5 Q1074 181 1082.500 192.500" fill="none" stroke="#dfe6ef" stroke-width="6.2"/><polygon points="1088.3,196.800 1087.5,184.500 1075.5,194.500" fill="#dfe6ef"/><defs><radialGradient id="ncg" cx="0.5" cy="0.6" r="0.7"><stop offset="0" stop-color="#fbfcfe"/><stop offset="0.7" stop-color="#eef2f8"/><stop offset="1" stop-color="#d4dbe8"/></radialGradient>
<filter id="blur1"><feGaussianBlur stdDeviation="0.8"/></filter></defs><path d="M997.5 221 Q996 213 1002 207.500 L1006 203.500 Q1024 200 1043.500 199 Q1052 199 1058 203.600 L1073 216 Q1078 222 1078 240 Q1078 254 1073.800 263 Q1071 270 1064.400 273.600 L1032 284 Q1022 286.500 1016.300 284 Q1010 280 1008 273.600 L1000.700 248.500 Z" fill="url(#ncg)" filter="url(#blur1)"/><path d="M998.500 223 L1046 214.500 L1060 206 L1076.500 221 L1077.500 236 L1052 229 L1046.500 236.500 L1004 246 Z" fill="#d9e0ec" opacity="0.85" filter="url(#blur1)"/><path d="M1004 206 L1044 201 L1056 205 L1046 212.500 L1001 219 Z" fill="#f7f9fc" opacity="0.9" filter="url(#blur1)"/><path d="M1022 247 Q1038 238 1050 237 L1073.500 233 L1071 262 L1029 279.500 L1012 254 Z" fill="#fbfcfe" opacity="0.95" filter="url(#blur1)"/><circle cx="1013" cy="230.500" r="8" fill="#f3f6fa" opacity="0.9" filter="url(#blur1)"/><circle cx="1047" cy="240.500" r="5" fill="#f6f8fb" opacity="0.95" filter="url(#blur1)"/><path d="M1047.700 210 L1046.600 233" stroke="#3a3f4c" stroke-width="1.2" opacity="0.75"/><path d="M1010.500 250 L1039 244" stroke="#3a3f4c" stroke-width="1.2" opacity="0.65"/><text transform="translate(1028.500,264.800) rotate(-12) skewX(-10)" font-family="Liberation Sans" font-size="14.500" fill="#3c3c3c" textLength="37.500" lengthAdjust="spacingAndGlyphs">Front</text><text transform="translate(1022,209.500) rotate(6) scale(1,0.42) skewX(-35)" font-family="Liberation Sans" font-size="14" font-weight="bold" fill="#5a5a5a" textLength="26" lengthAdjust="spacingAndGlyphs">Top</text><line x1="1014.4" y1="290.2" x2="1009.2" y2="233.8" stroke="#1010ff" stroke-width="1.2" stroke-linecap="round"/><line x1="1014.4" y1="290.2" x2="1071.6" y2="273.6" stroke="#e01010" stroke-width="1.2" stroke-linecap="round"/><line x1="1014.4" y1="290.2" x2="1001.2" y2="253.1" stroke="#22d022" stroke-width="1.4" stroke-linecap="round"/><text x="1006.5" y="231.5" font-family="Liberation Sans" font-size="9.5" fill="#1818ff">Z</text><text x="1078.5" y="278" font-family="Liberation Sans" font-size="9.5" fill="#e01010">X</text><path d="M1060.5 292 L1072.500 286 L1083.200 291 V303 L1072 308.200 L1060.500 303.500 Z" fill="#d2d2d0"/><path d="M1060.5 292 L1072.500 286 L1083.200 291 L1072 296.500 Z" fill="#e9e9e7"/><path d="M1072 296.500 L1083.200 291 V303 L1072 308.200 Z" fill="#dededc"/><polygon points="1087,293.600 1100.700,293.600 1093.800,300.400" fill="#3c3c3c"/><line x1="1086.5" y1="746.0" x2="1086.5" y2="732.5" stroke="#2424b8" stroke-width="2.2" stroke-linecap="round"/><polygon points="1084.300,737 1086.500,731 1088.700,737" fill="#2424b8"/><line x1="1081.0" y1="745.0" x2="1084.0" y2="746.5" stroke="#22aa22" stroke-width="1.5" stroke-linecap="round"/><text x="1087.5" y="731.5" font-family="Liberation Sans" font-size="8.5" fill="#111">Z</text><text x="1080" y="740.500" font-family="Liberation Sans" font-size="8.5" fill="#111">Y</text><text x="1104" y="750" font-family="Liberation Sans" font-size="8.5" fill="#111">X</text></svg>
<div class="abs" style="left:1121px;top:132px;width:785px;height:615px;background:#e6e6e6;border:1px solid #8e8e8e;border-radius:7px 7px 0 0"></div>
<div class="abs" style="left:1122px;top:133px;width:783px;height:23px;border-radius:6px 6px 0 0;background:linear-gradient(#f0f0f0 0,#e6e6e6 40%,#d2d2d2 55%,#d6d6d6 100%);border-bottom:1px solid #a2a2a2"></div>
<div class="abs" style="left:1122px;top:156px;width:3px;height:590px;background:linear-gradient(90deg,#bdbdbd,#f7f7f7 60%,#e4e4e4)"></div>
<div class="t" style="left:1476px;top:136px;color:#2a2a2a;font-weight:bold">Page*</div>
<div class="abs" style="left:1125px;top:156px;width:762px;height:573px;background:#707070"></div>
<div class="abs" style="left:1148px;top:175px;width:702px;height:497px;background:#fff;border:1px solid #000"></div>
<div class="abs" style="left:1125px;top:743px;width:777px;height:3px;background:#e0e0e0;border-top:1px solid #9a9a9a"></div>
<div class="abs" style="left:1901px;top:156px;width:4px;height:590px;background:linear-gradient(90deg,#e8e8e8,#c4c4c4 50%,#9c9c9c)"></div>
<svg style="left:0;top:0" width="1920" height="800"><rect x="1128.5" y="135.5" width="13" height="17" rx="1" fill="url(#gpg)" stroke="#8a8a8a"/><rect x="1842.5" y="135.500" width="17" height="17" rx="4" fill="none" stroke="#a0a0a0" stroke-width="1"/><rect x="1862.5" y="135.500" width="17" height="17" rx="4" fill="none" stroke="#a0a0a0" stroke-width="1"/><rect x="1882.5" y="135.500" width="17" height="17" rx="4" fill="none" stroke="#a0a0a0" stroke-width="1"/><path d="M1847 147 h8" stroke="#111" stroke-width="2.2"/><rect x="1867.500" y="140.500" width="7" height="7" fill="none" stroke="#111" stroke-width="1.600"/><path d="M1887.500 140.500 l7 7 M1894.500 140.500 l-7 7" stroke="#111" stroke-width="2.400"/><rect x="1887" y="156" width="14" height="573" fill="url(#gtrack)"/><rect x="1887" y="156" width="14" height="14" fill="#dadada"/><rect x="1887" y="715" width="14" height="14" fill="#dadada"/><path d="M1890.6 165.3 l3.4 -4.4 l3.4 4.4z" fill="#222"/><path d="M1890.6 719.7 l3.4 4.4 l3.4 -4.4z" fill="#222"/><rect x="1889.5" y="346.0" width="9" height="206.5" rx="4.5" fill="url(#ghandle)" stroke="#a3a3a3" stroke-width="1"/><rect x="1125" y="729" width="762" height="14" fill="url(#gtrackh)"/><rect x="1125" y="729" width="14" height="14" fill="#dadada"/><rect x="1873" y="729" width="14" height="14" fill="#dadada"/><path d="M1136 732 v8 l-6 -4z" fill="#222"/><path d="M1877 732 v8 l6 -4z" fill="#222"/><rect x="1887" y="729" width="14" height="14" fill="#d9d9d9"/><rect x="1378.500" y="731.500" width="262" height="9" rx="4.5" fill="url(#ghandleh)" stroke="#a3a3a3"/><rect x="1906" y="133" width="14" height="646" fill="url(#gtrack)"/><rect x="1906" y="133" width="14" height="14" fill="#dadada"/><rect x="1906" y="765" width="14" height="14" fill="#dadada"/><path d="M1909.6 142.3 l3.4 -4.4 l3.4 4.4z" fill="#a8a8a8"/><path d="M1909.6 769.7 l3.4 4.4 l3.4 -4.4z" fill="#222"/><rect x="1908.5" y="147.5" width="9" height="577" rx="4.5" fill="url(#ghandle)" stroke="#a3a3a3" stroke-width="1"/><line x1="1152.5" y1="258.3" x2="1348.5" y2="258.3" stroke="#000" stroke-width="0.9" /><line x1="1152.5" y1="325.4" x2="1283.5" y2="325.4" stroke="#000" stroke-width="0.9" /><line x1="1167.0" y1="392.0" x2="1348.5" y2="392.0" stroke="#000" stroke-width="0.9" /><line x1="1155.8" y1="256.8" x2="1155.8" y2="326.9" stroke="#000" stroke-width="0.9" /><line x1="1171.6" y1="256.8" x2="1171.6" y2="326.9" stroke="#000" stroke-width="0.9" /><line x1="1187.3" y1="256.8" x2="1187.3" y2="326.9" stroke="#000" stroke-width="0.9" /><line x1="1203.1" y1="256.8" x2="1203.1" y2="326.9" stroke="#000" stroke-width="0.9" /><line x1="1218.8" y1="256.8" x2="1218.8" y2="326.9" stroke="#000" stroke-width="0.9" /><line x1="1234.6" y1="256.8" x2="1234.6" y2="326.9" stroke="#000" stroke-width="0.9" /><line x1="1250.4" y1="256.8" x2="1250.4" y2="326.9" stroke="#000" stroke-width="0.9" /><line x1="1266.1" y1="256.8" x2="1266.1" y2="326.9" stroke="#000" stroke-width="0.9" /><line x1="1281.9" y1="256.8" x2="1281.9" y2="326.9" stroke="#000" stroke-width="0.9" /><line x1="1169.5" y1="323.9" x2="1169.5" y2="393.5" stroke="#000" stroke-width="0.9" /><line x1="1185.1" y1="323.9" x2="1185.1" y2="393.5" stroke="#000" stroke-width="0.9" /><line x1="1200.7" y1="323.9" x2="1200.7" y2="393.5" stroke="#000" stroke-width="0.9" /><line x1="1216.3" y1="323.9" x2="1216.3" y2="393.5" stroke="#000" stroke-width="0.9" /><line x1="1231.9" y1="323.9" x2="1231.9" y2="393.5" stroke="#000" stroke-width="0.9" /><line x1="1247.5" y1="323.9" x2="1247.5" y2="393.5" stroke="#000" stroke-width="0.9" /><line x1="1263.1" y1="323.9" x2="1263.1" y2="393.5" stroke="#000" stroke-width="0.9" /><line x1="1278.7" y1="323.9" x2="1278.7" y2="393.5" stroke="#000" stroke-width="0.9" /><line x1="1346.4" y1="256.8" x2="1346.4" y2="393.5" stroke="#000" stroke-width="0.9" /><line x1="1152.5" y1="271.3" x2="1156.5" y2="271.3" stroke="#000" stroke-width="0.9" /><line x1="1152.5" y1="311.8" x2="1156.5" y2="311.8" stroke="#000" stroke-width="0.9" /><line x1="1345.0" y1="271.3" x2="1349.5" y2="271.3" stroke="#000" stroke-width="0.9" /><line x1="1345.0" y1="378.6" x2="1349.5" y2="378.6" stroke="#000" stroke-width="0.9" /><line x1="1167.0" y1="378.6" x2="1170.0" y2="378.6" stroke="#000" stroke-width="0.9" /><polygon points="1441.3,301.700 1525.200,301.700 1525.200,321.500 1467.400,321.500 1441.300,340" fill="#c8c8c8" stroke="#555" stroke-width="0.8"/><rect x="1285.7" y="183.7" width="21.3" height="3.2" fill="#d4d4d4" stroke="#000" stroke-width="0.9"/><line x1="1305.3" y1="185.3" x2="1305.3" y2="200.0" stroke="#000" stroke-width="1.3" /><circle cx="1285.7" cy="185.3" r="2.0" fill="#000"/><circle cx="1307.0" cy="185.3" r="2.0" fill="#000"/><rect x="1305.2" y="198.4" width="21.3" height="3.2" fill="#d4d4d4" stroke="#000" stroke-width="0.9"/><line x1="1324.8" y1="200.0" x2="1324.8" y2="214.7" stroke="#000" stroke-width="1.3" /><circle cx="1305.2" cy="200.0" r="2.0" fill="#000"/><circle cx="1326.5" cy="200.0" r="2.0" fill="#000"/><rect x="1324.6" y="213.1" width="21.3" height="3.2" fill="#d4d4d4" stroke="#000" stroke-width="0.9"/><line x1="1344.2" y1="214.7" x2="1344.2" y2="229.4" stroke="#000" stroke-width="1.3" /><circle cx="1324.6" cy="214.7" r="2.0" fill="#000"/><circle cx="1345.9" cy="214.7" r="2.0" fill="#000"/><rect x="1344.0" y="227.8" width="21.3" height="3.2" fill="#d4d4d4" stroke="#000" stroke-width="0.9"/><line x1="1363.6" y1="229.4" x2="1363.6" y2="244.1" stroke="#000" stroke-width="1.3" /><circle cx="1344.0" cy="229.4" r="2.0" fill="#000"/><circle cx="1365.3" cy="229.4" r="2.0" fill="#000"/><rect x="1363.5" y="242.5" width="21.3" height="3.2" fill="#d4d4d4" stroke="#000" stroke-width="0.9"/><line x1="1383.1" y1="244.1" x2="1383.1" y2="258.8" stroke="#000" stroke-width="1.3" /><circle cx="1363.5" cy="244.1" r="2.0" fill="#000"/><circle cx="1384.8" cy="244.1" r="2.0" fill="#000"/><rect x="1383.0" y="257.2" width="21.3" height="3.2" fill="#d4d4d4" stroke="#000" stroke-width="0.9"/><line x1="1402.5" y1="258.8" x2="1402.5" y2="273.5" stroke="#000" stroke-width="1.3" /><circle cx="1383.0" cy="258.8" r="2.0" fill="#000"/><circle cx="1404.2" cy="258.8" r="2.0" fill="#000"/><rect x="1402.4" y="271.9" width="21.3" height="3.2" fill="#d4d4d4" stroke="#000" stroke-width="0.9"/><line x1="1422.0" y1="273.5" x2="1422.0" y2="288.2" stroke="#000" stroke-width="1.3" /><circle cx="1402.4" cy="273.5" r="2.0" fill="#000"/><circle cx="1423.7" cy="273.5" r="2.0" fill="#000"/><rect x="1421.9" y="286.6" width="21.3" height="3.2" fill="#d4d4d4" stroke="#000" stroke-width="0.9"/><line x1="1441.5" y1="288.2" x2="1441.5" y2="302.9" stroke="#000" stroke-width="1.3" /><circle cx="1421.9" cy="288.2" r="2.0" fill="#000"/><circle cx="1443.2" cy="288.2" r="2.0" fill="#000"/><line x1="1285.7" y1="185.3" x2="1285.7" y2="207.5" stroke="#000" stroke-width="1.3" /><line x1="1285.7" y1="207.5" x2="1411.8" y2="302.3" stroke="#000" stroke-width="1.4" /><line x1="1411.8" y1="302.3" x2="1441.3" y2="302.3" stroke="#000" stroke-width="1.4" /><line x1="1441.3" y1="288.0" x2="1441.3" y2="302.3" stroke="#000" stroke-width="1.3" /><circle cx="1285.7" cy="207.5" r="1.8" fill="#000"/><circle cx="1411.8" cy="302.3" r="1.8" fill="#000"/><circle cx="1441.3" cy="302.3" r="1.8" fill="#000"/><circle cx="1441.3" cy="340.0" r="1.8" fill="#000"/><circle cx="1467.4" cy="321.5" r="1.8" fill="#000"/><circle cx="1525.2" cy="302.0" r="1.8" fill="#000"/><circle cx="1525.2" cy="321.5" r="1.8" fill="#000"/><line x1="1583.9" y1="293.5" x2="1775.4" y2="293.5" stroke="#000" stroke-width="1.6" /><line x1="1583.9" y1="360.1" x2="1710.6" y2="360.1" stroke="#000" stroke-width="2.2" /><line x1="1598.1" y1="426.4" x2="1775.4" y2="426.4" stroke="#000" stroke-width="1.6" /><line x1="1583.9" y1="293.5" x2="1583.9" y2="360.1" stroke="#000" stroke-width="1.6" /><circle cx="1583.9" cy="293.5" r="2.0" fill="#000"/><circle cx="1583.9" cy="360.1" r="2.2" fill="#000"/><line x1="1599.6" y1="293.5" x2="1599.6" y2="360.1" stroke="#000" stroke-width="1.6" /><circle cx="1599.6" cy="293.5" r="2.0" fill="#000"/><circle cx="1599.6" cy="360.1" r="2.2" fill="#000"/><line x1="1615.4" y1="293.5" x2="1615.4" y2="360.1" stroke="#000" stroke-width="1.6" /><circle cx="1615.4" cy="293.5" r="2.0" fill="#000"/><circle cx="1615.4" cy="360.1" r="2.2" fill="#000"/><line x1="1631.1" y1="293.5" x2="1631.1" y2="360.1" stroke="#000" stroke-width="1.6" /><circle cx="1631.1" cy="293.5" r="2.0" fill="#000"/><circle cx="1631.1" cy="360.1" r="2.2" fill="#000"/><line x1="1646.8" y1="293.5" x2="1646.8" y2="360.1" stroke="#000" stroke-width="1.6" /><circle cx="1646.8" cy="293.5" r="2.0" fill="#000"/><circle cx="1646.8" cy="360.1" r="2.2" fill="#000"/><line x1="1662.6" y1="293.5" x2="1662.6" y2="360.1" stroke="#000" stroke-width="1.6" /><circle cx="1662.6" cy="293.5" r="2.0" fill="#000"/><circle cx="1662.6" cy="360.1" r="2.2" fill="#000"/><line x1="1678.3" y1="293.5" x2="1678.3" y2="360.1" stroke="#000" stroke-width="1.6" /><circle cx="1678.3" cy="293.5" r="2.0" fill="#000"/><circle cx="1678.3" cy="360.1" r="2.2" fill="#000"/><line x1="1694.0" y1="293.5" x2="1694.0" y2="360.1" stroke="#000" stroke-width="1.6" /><circle cx="1694.0" cy="293.5" r="2.0" fill="#000"/><circle cx="1694.0" cy="360.1" r="2.2" fill="#000"/><line x1="1709.7" y1="293.5" x2="1709.7" y2="360.1" stroke="#000" stroke-width="1.6" /><circle cx="1709.7" cy="293.5" r="2.0" fill="#000"/><circle cx="1709.7" cy="360.1" r="2.2" fill="#000"/><line x1="1598.1" y1="360.1" x2="1598.1" y2="426.4" stroke="#000" stroke-width="1.6" /><circle cx="1598.1" cy="426.4" r="2.0" fill="#000"/><circle cx="1598.1" cy="360.1" r="2.2" fill="#000"/><line x1="1613.7" y1="360.1" x2="1613.7" y2="426.4" stroke="#000" stroke-width="1.6" /><circle cx="1613.7" cy="426.4" r="2.0" fill="#000"/><circle cx="1613.7" cy="360.1" r="2.2" fill="#000"/><line x1="1629.3" y1="360.1" x2="1629.3" y2="426.4" stroke="#000" stroke-width="1.6" /><circle cx="1629.3" cy="426.4" r="2.0" fill="#000"/><circle cx="1629.3" cy="360.1" r="2.2" fill="#000"/><line x1="1644.9" y1="360.1" x2="1644.9" y2="426.4" stroke="#000" stroke-width="1.6" /><circle cx="1644.9" cy="426.4" r="2.0" fill="#000"/><circle cx="1644.9" cy="360.1" r="2.2" fill="#000"/><line x1="1660.5" y1="360.1" x2="1660.5" y2="426.4" stroke="#000" stroke-width="1.6" /><circle cx="1660.5" cy="426.4" r="2.0" fill="#000"/><circle cx="1660.5" cy="360.1" r="2.2" fill="#000"/><line x1="1676.1" y1="360.1" x2="1676.1" y2="426.4" stroke="#000" stroke-width="1.6" /><circle cx="1676.1" cy="426.4" r="2.0" fill="#000"/><circle cx="1676.1" cy="360.1" r="2.2" fill="#000"/><line x1="1691.7" y1="360.1" x2="1691.7" y2="426.4" stroke="#000" stroke-width="1.6" /><circle cx="1691.7" cy="426.4" r="2.0" fill="#000"/><circle cx="1691.7" cy="360.1" r="2.2" fill="#000"/><line x1="1707.3" y1="360.1" x2="1707.3" y2="426.4" stroke="#000" stroke-width="1.6" /><circle cx="1707.3" cy="426.4" r="2.0" fill="#000"/><circle cx="1707.3" cy="360.1" r="2.2" fill="#000"/><line x1="1775.4" y1="293.5" x2="1775.4" y2="426.4" stroke="#000" stroke-width="1.6" /><circle cx="1775.4" cy="293.5" r="2.0" fill="#000"/><circle cx="1775.4" cy="426.4" r="2.0" fill="#000"/><line x1="1549.5" y1="360.1" x2="1809.4" y2="360.1" stroke="#222" stroke-width="1.1" stroke-dasharray="5.5 2.5"/><line x1="1549.5" y1="360.1" x2="1549.5" y2="352.0" stroke="#222" stroke-width="1.1" /><polygon points="1549.5,347.500 1547.8,355.500 1551.2,355.500" fill="#111"/><text x="1546.9" y="343" font-family="Liberation Sans" font-size="7.5" fill="#1a1a50">A</text><line x1="1809.4" y1="360.1" x2="1809.4" y2="352.0" stroke="#222" stroke-width="1.1" /><polygon points="1809.4,347.500 1807.7,355.500 1811.1,355.500" fill="#111"/><text x="1806.8" y="343" font-family="Liberation Sans" font-size="7.5" fill="#1a1a50">A</text><line x1="1545.9" y1="293.5" x2="1545.9" y2="426.4" stroke="#8a8a8a" stroke-width="0.9" /><line x1="1545.0" y1="293.5" x2="1583.9" y2="293.5" stroke="#8a8a8a" stroke-width="0.9" /><line x1="1545.0" y1="426.4" x2="1598.1" y2="426.4" stroke="#8a8a8a" stroke-width="0.9" /><text transform="translate(1536.8,403.5) rotate(-90)" font-family="Liberation Sans" font-size="23.3" fill="#000" textLength="75.5" lengthAdjust="spacingAndGlyphs">2.00 m</text><line x1="1586.9" y1="447.7" x2="1586.9" y2="465.3" stroke="#000" stroke-width="1.3" /><circle cx="1586.9" cy="465.3" r="1.8" fill="#000"/><line x1="1586.9" y1="447.7" x2="1603.7" y2="447.7" stroke="#000" stroke-width="2.2" /><line x1="1602.5" y1="447.7" x2="1602.5" y2="459.5" stroke="#000" stroke-width="1.3" /><circle cx="1586.9" cy="447.7" r="2.0" fill="#000"/><circle cx="1603.7" cy="447.7" r="2.0" fill="#000"/><line x1="1602.5" y1="459.5" x2="1619.2" y2="459.5" stroke="#000" stroke-width="2.2" /><line x1="1618.0" y1="459.5" x2="1618.0" y2="471.4" stroke="#000" stroke-width="1.3" /><circle cx="1602.5" cy="459.5" r="2.0" fill="#000"/><circle cx="1619.2" cy="459.5" r="2.0" fill="#000"/><line x1="1618.0" y1="471.4" x2="1634.8" y2="471.4" stroke="#000" stroke-width="2.2" /><line x1="1633.6" y1="471.4" x2="1633.6" y2="483.2" stroke="#000" stroke-width="1.3" /><circle cx="1618.0" cy="471.4" r="2.0" fill="#000"/><circle cx="1634.8" cy="471.4" r="2.0" fill="#000"/><line x1="1633.6" y1="483.2" x2="1650.4" y2="483.2" stroke="#000" stroke-width="2.2" /><line x1="1649.2" y1="483.2" x2="1649.2" y2="495.0" stroke="#000" stroke-width="1.3" /><circle cx="1633.6" cy="483.2" r="2.0" fill="#000"/><circle cx="1650.4" cy="483.2" r="2.0" fill="#000"/><line x1="1649.1" y1="495.0" x2="1665.9" y2="495.0" stroke="#000" stroke-width="2.2" /><line x1="1664.7" y1="495.0" x2="1664.7" y2="506.8" stroke="#000" stroke-width="1.3" /><circle cx="1649.1" cy="495.0" r="2.0" fill="#000"/><circle cx="1665.9" cy="495.0" r="2.0" fill="#000"/><line x1="1664.7" y1="506.8" x2="1681.5" y2="506.8" stroke="#000" stroke-width="2.2" /><line x1="1680.2" y1="506.8" x2="1680.2" y2="518.7" stroke="#000" stroke-width="1.3" /><circle cx="1664.7" cy="506.8" r="2.0" fill="#000"/><circle cx="1681.5" cy="506.8" r="2.0" fill="#000"/><line x1="1680.2" y1="518.7" x2="1697.0" y2="518.7" stroke="#000" stroke-width="2.2" /><line x1="1695.8" y1="518.7" x2="1695.8" y2="530.5" stroke="#000" stroke-width="1.3" /><circle cx="1680.2" cy="518.7" r="2.0" fill="#000"/><circle cx="1697.0" cy="518.7" r="2.0" fill="#000"/><line x1="1695.8" y1="530.5" x2="1712.5" y2="530.5" stroke="#000" stroke-width="2.2" /><line x1="1711.3" y1="530.5" x2="1711.3" y2="542.3" stroke="#000" stroke-width="1.3" /><circle cx="1695.8" cy="530.5" r="2.0" fill="#000"/><circle cx="1712.5" cy="530.5" r="2.0" fill="#000"/><line x1="1586.9" y1="465.3" x2="1687.8" y2="541.3" stroke="#000" stroke-width="1.2" /><circle cx="1687.8" cy="541.3" r="1.8" fill="#000"/><line x1="1687.8" y1="541.6" x2="1710.6" y2="541.9" stroke="#000" stroke-width="1.2" /><line x1="1710.6" y1="542.2" x2="1777.5" y2="542.2" stroke="#000" stroke-width="2.4" /><line x1="1777.5" y1="542.2" x2="1777.5" y2="556.5" stroke="#000" stroke-width="1.5" /><circle cx="1777.5" cy="542.2" r="2.2" fill="#000"/><circle cx="1777.5" cy="556.5" r="2.0" fill="#000"/><line x1="1731.3" y1="556.5" x2="1777.5" y2="556.5" stroke="#000" stroke-width="1.5" /><circle cx="1731.3" cy="556.5" r="2.0" fill="#000"/><line x1="1710.6" y1="530.7" x2="1710.6" y2="571.7" stroke="#000" stroke-width="1.5" /><circle cx="1710.6" cy="542.2" r="2.6" fill="#000"/><circle cx="1710.6" cy="571.7" r="2.0" fill="#000"/><line x1="1695.3" y1="554.4" x2="1712.1" y2="554.4" stroke="#000" stroke-width="2.2" /><line x1="1695.9" y1="554.4" x2="1695.9" y2="566.2" stroke="#000" stroke-width="1.3" /><circle cx="1712.1" cy="554.4" r="2.0" fill="#000"/><circle cx="1695.3" cy="554.4" r="2.0" fill="#000"/><line x1="1679.6" y1="566.2" x2="1696.4" y2="566.2" stroke="#000" stroke-width="2.2" /><line x1="1680.2" y1="566.2" x2="1680.2" y2="577.9" stroke="#000" stroke-width="1.3" /><circle cx="1696.4" cy="566.2" r="2.0" fill="#000"/><circle cx="1679.6" cy="566.2" r="2.0" fill="#000"/><line x1="1663.9" y1="577.9" x2="1680.7" y2="577.9" stroke="#000" stroke-width="2.2" /><line x1="1664.5" y1="577.9" x2="1664.5" y2="589.7" stroke="#000" stroke-width="1.3" /><circle cx="1680.7" cy="577.9" r="2.0" fill="#000"/><circle cx="1663.9" cy="577.9" r="2.0" fill="#000"/><line x1="1648.1" y1="589.7" x2="1664.9" y2="589.7" stroke="#000" stroke-width="2.2" /><line x1="1648.7" y1="589.7" x2="1648.7" y2="601.4" stroke="#000" stroke-width="1.3" /><circle cx="1664.9" cy="589.7" r="2.0" fill="#000"/><circle cx="1648.1" cy="589.7" r="2.0" fill="#000"/><line x1="1632.4" y1="601.4" x2="1649.2" y2="601.4" stroke="#000" stroke-width="2.2" /><line x1="1633.0" y1="601.4" x2="1633.0" y2="613.2" stroke="#000" stroke-width="1.3" /><circle cx="1649.2" cy="601.4" r="2.0" fill="#000"/><circle cx="1632.4" cy="601.4" r="2.0" fill="#000"/><line x1="1616.7" y1="613.2" x2="1633.5" y2="613.2" stroke="#000" stroke-width="2.2" /><line x1="1617.3" y1="613.2" x2="1617.3" y2="625.0" stroke="#000" stroke-width="1.3" /><circle cx="1633.5" cy="613.2" r="2.0" fill="#000"/><circle cx="1616.7" cy="613.2" r="2.0" fill="#000"/><line x1="1601.0" y1="625.0" x2="1617.8" y2="625.0" stroke="#000" stroke-width="2.2" /><circle cx="1617.8" cy="625.0" r="2.0" fill="#000"/><circle cx="1601.0" cy="625.0" r="2.0" fill="#000"/><line x1="1602.1" y1="624.6" x2="1602.1" y2="635.6" stroke="#000" stroke-width="1.3" /><line x1="1602.1" y1="635.6" x2="1626.4" y2="635.6" stroke="#000" stroke-width="1.3" /><circle cx="1602.1" cy="635.6" r="1.8" fill="#000"/><circle cx="1626.4" cy="635.6" r="1.8" fill="#000"/><line x1="1626.4" y1="635.6" x2="1731.3" y2="556.5" stroke="#000" stroke-width="1.2" /><line x1="1546.5" y1="431.9" x2="1546.5" y2="448.6" stroke="#8a8a8a" stroke-width="0.9" /><line x1="1546.5" y1="465.3" x2="1546.5" y2="491.2" stroke="#8a8a8a" stroke-width="0.9" /><line x1="1546.5" y1="448.6" x2="1586.9" y2="448.6" stroke="#8a8a8a" stroke-width="0.9" /><line x1="1546.5" y1="465.3" x2="1586.9" y2="465.3" stroke="#8a8a8a" stroke-width="0.9" /><text transform="translate(1536.8,529.2) rotate(-90)" font-family="Liberation Sans" font-size="23.3" fill="#000" textLength="75.5" lengthAdjust="spacingAndGlyphs">0.25 m</text><line x1="1731.3" y1="556.5" x2="1731.3" y2="655.3" stroke="#8a8a8a" stroke-width="0.9" /><line x1="1777.5" y1="556.5" x2="1777.5" y2="655.3" stroke="#8a8a8a" stroke-width="0.9" /><line x1="1699.0" y1="652.3" x2="1731.3" y2="652.3" stroke="#8a8a8a" stroke-width="0.9" /><line x1="1777.5" y1="652.3" x2="1794.8" y2="652.3" stroke="#8a8a8a" stroke-width="0.9" /><text x="1661" y="643.2" font-family="Liberation Sans" font-size="23.3" fill="#000" textLength="75.5" lengthAdjust="spacingAndGlyphs">0.70 m</text><line x1="1777.5" y1="542.2" x2="1837.7" y2="542.2" stroke="#8a8a8a" stroke-width="0.9" /><line x1="1777.5" y1="556.5" x2="1837.7" y2="556.5" stroke="#8a8a8a" stroke-width="0.9" /><line x1="1834.6" y1="526.1" x2="1834.6" y2="542.2" stroke="#8a8a8a" stroke-width="0.9" /><line x1="1834.6" y1="556.5" x2="1834.6" y2="608.2" stroke="#8a8a8a" stroke-width="0.9" /><text transform="translate(1824.2,644.7) rotate(-90)" font-family="Liberation Sans" font-size="23.3" fill="#000" textLength="75.5" lengthAdjust="spacingAndGlyphs">0.20 m</text><polyline points="1224.9,508.5 1161.6,535.9 1221.8,659.3" fill="none" stroke="#000" stroke-width="1.6" stroke-linejoin="round"/><line x1="1221.8" y1="659.3" x2="1303.3" y2="579.3" stroke="#000" stroke-width="2.3" /><circle cx="1224.9" cy="508.5" r="2.2" fill="#000"/><circle cx="1161.6" cy="535.9" r="2.2" fill="#000"/><circle cx="1221.8" cy="659.3" r="2.2" fill="#000"/><circle cx="1303.3" cy="579.3" r="2.2" fill="#000"/><line x1="1327.4" y1="422.3" x2="1393.3" y2="432.0" stroke="#000" stroke-width="2.5" /><line x1="1336.4" y1="419.4" x2="1400.5" y2="428.1" stroke="#000" stroke-width="1.3" /><line x1="1327.4" y1="422.3" x2="1336.4" y2="419.4" stroke="#000" stroke-width="1.3" /><line x1="1393.3" y1="432.0" x2="1400.5" y2="428.1" stroke="#000" stroke-width="1.4" /><circle cx="1327.4" cy="422.3" r="2.6" fill="#000"/><circle cx="1393.3" cy="432.0" r="2.2" fill="#000"/><circle cx="1336.4" cy="419.4" r="2.0" fill="#000"/><circle cx="1400.5" cy="428.1" r="2.3" fill="#000"/><line x1="1338.6" y1="423.9" x2="1337.8" y2="433.1" stroke="#000" stroke-width="1.4" /><line x1="1378.1" y1="429.8" x2="1374.9" y2="441.8" stroke="#000" stroke-width="1.4" /><line x1="1382.4" y1="430.4" x2="1380.8" y2="443.0" stroke="#000" stroke-width="1.3" /><line x1="1337.8" y1="433.1" x2="1374.9" y2="441.8" stroke="#000" stroke-width="1.3" /><line x1="1380.8" y1="443.0" x2="1383.6" y2="446.6" stroke="#000" stroke-width="1.2" /><circle cx="1337.8" cy="433.1" r="1.9" fill="#000"/><circle cx="1374.9" cy="441.8" r="1.9" fill="#000"/><circle cx="1380.8" cy="443.0" r="1.9" fill="#000"/><circle cx="1338.6" cy="424.4" r="1.7" fill="#000"/><line x1="1317.5" y1="436.7" x2="1381.6" y2="450.1" stroke="#000" stroke-width="2.5" /><line x1="1326.9" y1="433.1" x2="1389.1" y2="445.6" stroke="#000" stroke-width="1.3" /><line x1="1317.5" y1="436.7" x2="1326.9" y2="433.1" stroke="#000" stroke-width="1.3" /><line x1="1381.6" y1="450.1" x2="1389.1" y2="445.6" stroke="#000" stroke-width="1.4" /><circle cx="1317.5" cy="436.7" r="2.6" fill="#000"/><circle cx="1381.6" cy="450.1" r="2.2" fill="#000"/><circle cx="1326.9" cy="433.1" r="2.0" fill="#000"/><circle cx="1389.1" cy="445.6" r="2.3" fill="#000"/><line x1="1328.4" y1="439.0" x2="1327.6" y2="448.2" stroke="#000" stroke-width="1.4" /><line x1="1366.9" y1="447.0" x2="1363.7" y2="459.0" stroke="#000" stroke-width="1.4" /><line x1="1371.0" y1="447.9" x2="1369.4" y2="460.5" stroke="#000" stroke-width="1.3" /><line x1="1327.6" y1="448.2" x2="1363.7" y2="459.0" stroke="#000" stroke-width="1.3" /><line x1="1369.4" y1="460.5" x2="1370.9" y2="465.2" stroke="#000" stroke-width="1.2" /><circle cx="1327.6" cy="448.2" r="1.9" fill="#000"/><circle cx="1363.7" cy="459.0" r="1.9" fill="#000"/><circle cx="1369.4" cy="460.5" r="1.9" fill="#000"/><circle cx="1328.4" cy="439.5" r="1.7" fill="#000"/><line x1="1307.0" y1="450.6" x2="1368.9" y2="468.7" stroke="#000" stroke-width="2.5" /><line x1="1317.5" y1="447.0" x2="1377.9" y2="463.2" stroke="#000" stroke-width="1.3" /><line x1="1307.0" y1="450.6" x2="1317.5" y2="447.0" stroke="#000" stroke-width="1.3" /><line x1="1368.9" y1="468.7" x2="1377.9" y2="463.2" stroke="#000" stroke-width="1.4" /><circle cx="1307.0" cy="450.6" r="2.6" fill="#000"/><circle cx="1368.9" cy="468.7" r="2.2" fill="#000"/><circle cx="1317.5" cy="447.0" r="2.0" fill="#000"/><circle cx="1377.9" cy="463.2" r="2.3" fill="#000"/><line x1="1317.5" y1="453.7" x2="1316.7" y2="462.9" stroke="#000" stroke-width="1.4" /><line x1="1354.7" y1="464.5" x2="1351.5" y2="476.5" stroke="#000" stroke-width="1.4" /><line x1="1358.7" y1="465.7" x2="1357.1" y2="478.3" stroke="#000" stroke-width="1.3" /><line x1="1316.7" y1="462.9" x2="1351.5" y2="476.5" stroke="#000" stroke-width="1.3" /><line x1="1357.1" y1="478.3" x2="1358.3" y2="485.0" stroke="#000" stroke-width="1.2" /><circle cx="1316.7" cy="462.9" r="1.9" fill="#000"/><circle cx="1351.5" cy="476.5" r="1.9" fill="#000"/><circle cx="1357.1" cy="478.3" r="1.9" fill="#000"/><circle cx="1317.5" cy="454.2" r="1.7" fill="#000"/><line x1="1296.7" y1="465.1" x2="1356.3" y2="488.5" stroke="#000" stroke-width="2.5" /><line x1="1307.5" y1="461.1" x2="1366.2" y2="481.7" stroke="#000" stroke-width="1.3" /><line x1="1296.7" y1="465.1" x2="1307.5" y2="461.1" stroke="#000" stroke-width="1.3" /><line x1="1356.3" y1="488.5" x2="1366.2" y2="481.7" stroke="#000" stroke-width="1.4" /><circle cx="1296.7" cy="465.1" r="2.6" fill="#000"/><circle cx="1356.3" cy="488.5" r="2.2" fill="#000"/><circle cx="1307.5" cy="461.1" r="2.0" fill="#000"/><circle cx="1366.2" cy="481.7" r="2.3" fill="#000"/><line x1="1306.8" y1="469.1" x2="1306.0" y2="478.3" stroke="#000" stroke-width="1.4" /><line x1="1342.6" y1="483.1" x2="1339.4" y2="495.1" stroke="#000" stroke-width="1.4" /><line x1="1346.5" y1="484.6" x2="1344.9" y2="497.2" stroke="#000" stroke-width="1.3" /><line x1="1306.0" y1="478.3" x2="1339.4" y2="495.1" stroke="#000" stroke-width="1.3" /><line x1="1344.9" y1="497.2" x2="1345.6" y2="504.9" stroke="#000" stroke-width="1.2" /><circle cx="1306.0" cy="478.3" r="1.9" fill="#000"/><circle cx="1339.4" cy="495.1" r="1.9" fill="#000"/><circle cx="1344.9" cy="497.2" r="1.9" fill="#000"/><circle cx="1306.8" cy="469.6" r="1.7" fill="#000"/><line x1="1285.9" y1="480.8" x2="1343.6" y2="508.4" stroke="#000" stroke-width="2.5" /><line x1="1297.3" y1="475.0" x2="1353.9" y2="499.7" stroke="#000" stroke-width="1.3" /><line x1="1285.9" y1="480.8" x2="1297.3" y2="475.0" stroke="#000" stroke-width="1.3" /><line x1="1343.6" y1="508.4" x2="1353.9" y2="499.7" stroke="#000" stroke-width="1.4" /><circle cx="1285.9" cy="480.8" r="2.6" fill="#000"/><circle cx="1343.6" cy="508.4" r="2.2" fill="#000"/><circle cx="1297.3" cy="475.0" r="2.0" fill="#000"/><circle cx="1353.9" cy="499.7" r="2.3" fill="#000"/><line x1="1295.7" y1="485.5" x2="1294.9" y2="494.7" stroke="#000" stroke-width="1.4" /><line x1="1330.3" y1="502.1" x2="1327.1" y2="514.1" stroke="#000" stroke-width="1.4" /><line x1="1334.1" y1="503.8" x2="1332.5" y2="516.4" stroke="#000" stroke-width="1.3" /><line x1="1294.9" y1="494.7" x2="1327.1" y2="514.1" stroke="#000" stroke-width="1.3" /><line x1="1332.5" y1="516.4" x2="1331.7" y2="525.6" stroke="#000" stroke-width="1.2" /><circle cx="1294.9" cy="494.7" r="1.9" fill="#000"/><circle cx="1327.1" cy="514.1" r="1.9" fill="#000"/><circle cx="1332.5" cy="516.4" r="1.9" fill="#000"/><circle cx="1295.7" cy="486.0" r="1.7" fill="#000"/><line x1="1275.1" y1="496.3" x2="1329.7" y2="529.1" stroke="#000" stroke-width="2.5" /><line x1="1286.8" y1="489.8" x2="1341.8" y2="518.8" stroke="#000" stroke-width="1.3" /><line x1="1275.1" y1="496.3" x2="1286.8" y2="489.8" stroke="#000" stroke-width="1.3" /><line x1="1329.7" y1="529.1" x2="1341.8" y2="518.8" stroke="#000" stroke-width="1.4" /><circle cx="1275.1" cy="496.3" r="2.6" fill="#000"/><circle cx="1329.7" cy="529.1" r="2.2" fill="#000"/><circle cx="1286.8" cy="489.8" r="2.0" fill="#000"/><circle cx="1341.8" cy="518.8" r="2.3" fill="#000"/><line x1="1284.4" y1="501.9" x2="1283.6" y2="511.1" stroke="#000" stroke-width="1.4" /><line x1="1317.1" y1="521.6" x2="1313.9" y2="533.6" stroke="#000" stroke-width="1.4" /><line x1="1320.7" y1="523.7" x2="1319.1" y2="536.3" stroke="#000" stroke-width="1.3" /><line x1="1283.6" y1="511.1" x2="1313.9" y2="533.6" stroke="#000" stroke-width="1.3" /><line x1="1319.1" y1="536.3" x2="1317.7" y2="546.9" stroke="#000" stroke-width="1.2" /><circle cx="1283.6" cy="511.1" r="1.9" fill="#000"/><circle cx="1313.9" cy="533.6" r="1.9" fill="#000"/><circle cx="1319.1" cy="536.3" r="1.9" fill="#000"/><circle cx="1284.4" cy="502.4" r="1.7" fill="#000"/><line x1="1263.3" y1="512.5" x2="1315.7" y2="550.4" stroke="#000" stroke-width="2.5" /><line x1="1276.3" y1="505.1" x2="1329.2" y2="538.7" stroke="#000" stroke-width="1.3" /><line x1="1263.3" y1="512.5" x2="1276.3" y2="505.1" stroke="#000" stroke-width="1.3" /><line x1="1315.7" y1="550.4" x2="1329.2" y2="538.7" stroke="#000" stroke-width="1.4" /><circle cx="1263.3" cy="512.5" r="2.6" fill="#000"/><circle cx="1315.7" cy="550.4" r="2.2" fill="#000"/><circle cx="1276.3" cy="505.1" r="2.0" fill="#000"/><circle cx="1329.2" cy="538.7" r="2.3" fill="#000"/><line x1="1272.2" y1="518.9" x2="1271.4" y2="528.1" stroke="#000" stroke-width="1.4" /><line x1="1303.6" y1="541.7" x2="1300.4" y2="553.7" stroke="#000" stroke-width="1.4" /><line x1="1307.1" y1="544.1" x2="1305.5" y2="556.7" stroke="#000" stroke-width="1.3" /><line x1="1271.4" y1="528.1" x2="1300.4" y2="553.7" stroke="#000" stroke-width="1.3" /><line x1="1305.5" y1="556.7" x2="1304.1" y2="569.0" stroke="#000" stroke-width="1.2" /><circle cx="1271.4" cy="528.1" r="1.9" fill="#000"/><circle cx="1300.4" cy="553.7" r="1.9" fill="#000"/><circle cx="1305.5" cy="556.7" r="1.9" fill="#000"/><circle cx="1272.2" cy="519.4" r="1.7" fill="#000"/><line x1="1251.6" y1="528.8" x2="1302.1" y2="572.5" stroke="#000" stroke-width="2.5" /><line x1="1263.3" y1="516.5" x2="1315.7" y2="559.5" stroke="#000" stroke-width="1.3" /><line x1="1251.6" y1="528.8" x2="1263.3" y2="516.5" stroke="#000" stroke-width="1.3" /><line x1="1302.1" y1="572.5" x2="1315.7" y2="559.5" stroke="#000" stroke-width="1.4" /><circle cx="1251.6" cy="528.8" r="2.6" fill="#000"/><circle cx="1302.1" cy="572.5" r="2.2" fill="#000"/><circle cx="1263.3" cy="516.5" r="2.0" fill="#000"/><circle cx="1315.7" cy="559.5" r="2.3" fill="#000"/><polyline points="1220.5,510.0 1224.9,508.5 1231.2,513.8 1237.7,510.7 1243.5,515.2 1248.9,512.9 1254.3,516.9 1258.8,514.2 1263.3,512.5" fill="none" stroke="#000" stroke-width="1.3" stroke-linejoin="round"/><circle cx="1224.9" cy="508.5" r="1.9" fill="#000"/><circle cx="1231.2" cy="513.8" r="1.9" fill="#000"/><circle cx="1237.7" cy="510.7" r="1.9" fill="#000"/><circle cx="1243.5" cy="515.2" r="1.9" fill="#000"/><circle cx="1248.9" cy="512.9" r="1.9" fill="#000"/><circle cx="1254.3" cy="516.9" r="1.9" fill="#000"/><circle cx="1258.8" cy="514.2" r="1.9" fill="#000"/><circle cx="1263.3" cy="512.5" r="1.9" fill="#000"/><line x1="1231.2" y1="513.8" x2="1303.3" y2="579.3" stroke="#000" stroke-width="1.5" /><line x1="1237.5" y1="516.5" x2="1294.0" y2="568.5" stroke="#000" stroke-width="1.2" /><line x1="1243.5" y1="515.2" x2="1256.0" y2="525.5" stroke="#000" stroke-width="1.2" /><line x1="1254.3" y1="516.9" x2="1262.0" y2="523.5" stroke="#000" stroke-width="1.2" /><line x1="1248.9" y1="512.9" x2="1263.5" y2="524.5" stroke="#000" stroke-width="1.1" /><line x1="1251.6" y1="528.8" x2="1291.3" y2="567.1" stroke="#000" stroke-width="1.6" /><line x1="1259.0" y1="531.0" x2="1296.0" y2="565.0" stroke="#000" stroke-width="1.2" /><line x1="1302.1" y1="572.5" x2="1291.3" y2="567.1" stroke="#000" stroke-width="1.3" /><line x1="1258.0" y1="521.0" x2="1272.5" y2="524.0" stroke="#000" stroke-width="1.8" /><line x1="1262.0" y1="533.0" x2="1263.0" y2="541.5" stroke="#000" stroke-width="2.6" /><circle cx="1256.0" cy="525.5" r="2.0" fill="#000"/><circle cx="1262.0" cy="523.5" r="2.0" fill="#000"/><circle cx="1251.6" cy="528.8" r="2.0" fill="#000"/><circle cx="1262.0" cy="533.0" r="2.0" fill="#000"/><circle cx="1263.0" cy="541.5" r="2.0" fill="#000"/><circle cx="1291.3" cy="567.1" r="2.0" fill="#000"/><circle cx="1294.0" cy="568.5" r="2.0" fill="#000"/><circle cx="1296.0" cy="565.0" r="2.0" fill="#000"/><circle cx="1272.5" cy="524.0" r="2.0" fill="#000"/><circle cx="1266.0" cy="518.0" r="2.0" fill="#000"/></svg>
<div class="tab" style="left:480px;top:746px;width:101px;height:29px;border-radius:0 0 3px 3px;border-top:none;background:linear-gradient(#d3d3d3,#dddddd)"></div>
<div class="tab on" style="left:336px;top:746px;width:143px;height:32px;border-radius:0 0 3px 3px;border-top:none;background:linear-gradient(#ededed,#e6e6e6)"></div>
<div class="t" style="left:366px;top:754px">Unnamed : 1*</div>
<div class="t" style="left:511px;top:753px">Page*</div>
<div class="t" style="left:2px;top:789px">Python console</div>
<div class="t" style="left:1422px;top:789px">Report view</div>
<div class="abs" style="left:0;top:810px;width:1414px;height:202px;background:#f3f3f3;border:1px solid #9c9c9c;border-left:1px solid #8a8a8a"></div>
<div class="abs" style="left:1420px;top:810px;width:500px;height:202px;background:#f3f3f3;border:1px solid #9c9c9c"></div>
<div class="abs" style="left:0;top:1051px;width:1920px;height:2px;background:linear-gradient(#b9b9b9,#8c8c8c)"></div>
<div class="t" style="left:6px;top:1024px">Preselected: Stairs002 - Unnamed.Stairs002.Face89 (1431.94, -3620.16, 1235.29)</div>
<div class="t" style="left:1728px;top:1024px">Blender</div>
<div class="t" style="left:1799px;top:1024px">4.34 m x 3.50 m</div>
<svg style="left:0;top:740px" width="1920" height="313" viewBox="0 740 1920 313"><text x="342" y="769.300" font-family="Liberation Sans" font-weight="bold" font-size="21" fill="#d8141c" stroke="#8e0a10" stroke-width="0.5" textLength="10" lengthAdjust="spacingAndGlyphs">F</text><g transform="translate(353,764.5)"><circle r="3.4" fill="none" stroke="#3a62a8" stroke-width="2.4"/><circle r="4.5" fill="none" stroke="#3a62a8" stroke-width="2" stroke-dasharray="1.8 1.8"/></g><path d="M457.500 758.500 l8 8 M465.500 758.500 l-8 8" stroke="#3c3c3c" stroke-width="2.9"/><rect x="489.500" y="753.500" width="11" height="15" rx="1" fill="url(#gpg)" stroke="#8a8a8a"/><path d="M558.500 757.500 l8 8 M566.500 757.500 l-8 8" stroke="#3c3c3c" stroke-width="2.9"/><rect x="948.0" y="781" width="1.5" height="1.5" fill="#8f8f8f"/><rect x="953.5" y="781" width="1.5" height="1.5" fill="#8f8f8f"/><rect x="959.0" y="781" width="1.5" height="1.5" fill="#8f8f8f"/><rect x="964.5" y="781" width="1.5" height="1.5" fill="#8f8f8f"/><rect x="970.0" y="781" width="1.5" height="1.5" fill="#8f8f8f"/><rect x="1416.500" y="887.0" width="1.5" height="1.5" fill="#8f8f8f"/><rect x="1416.500" y="892.5" width="1.5" height="1.5" fill="#8f8f8f"/><rect x="1416.500" y="898.0" width="1.5" height="1.5" fill="#8f8f8f"/><rect x="1416.500" y="903.5" width="1.5" height="1.5" fill="#8f8f8f"/><rect x="1416.500" y="909.0" width="1.5" height="1.5" fill="#8f8f8f"/><rect x="1382.4" y="792.0" width="10.6" height="10.6" rx="2" fill="none" stroke="#666" stroke-width="1.1"/><rect x="1400.0" y="792.0" width="10.6" height="10.6" rx="2" fill="none" stroke="#666" stroke-width="1.1"/><rect x="1386.5" y="794.0" width="4.5" height="4.5" rx="0.8" fill="none" stroke="#6e6e6e" stroke-width="1"/><rect x="1384.4" y="796.0999999999999" width="4.5" height="4.5" rx="0.8" fill="#d6d6d6" stroke="#6e6e6e" stroke-width="1"/><path d="M1402.5 794.5 l5.6 5.6 M1408.1 794.5 l-5.6 5.6" stroke="#5c5c5c" stroke-width="1.9"/><rect x="1889.0" y="792.0" width="10.6" height="10.6" rx="2" fill="none" stroke="#666" stroke-width="1.1"/><rect x="1906.4" y="792.0" width="10.6" height="10.6" rx="2" fill="none" stroke="#666" stroke-width="1.1"/><rect x="1893.1" y="794.0" width="4.5" height="4.5" rx="0.8" fill="none" stroke="#6e6e6e" stroke-width="1"/><rect x="1891.0" y="796.0999999999999" width="4.5" height="4.5" rx="0.8" fill="#d6d6d6" stroke="#6e6e6e" stroke-width="1"/><path d="M1908.9 794.5 l5.6 5.6 M1914.5 794.5 l-5.6 5.6" stroke="#5c5c5c" stroke-width="1.9"/><rect x="1399.5" y="811" width="13.5" height="200" fill="url(#gtrack)"/><rect x="1399.5" y="811" width="13.5" height="14" fill="#dadada"/><rect x="1399.5" y="997" width="13.5" height="14" fill="#dadada"/><path d="M1402.85 820.3 l3.4 -4.4 l3.4 4.4z" fill="#222"/><path d="M1402.85 1001.7 l3.4 4.4 l3.4 -4.4z" fill="#9a9a9a"/><rect x="1402.0" y="966.0" width="8.5" height="30.5" rx="4.5" fill="url(#ghandle)" stroke="#a3a3a3" stroke-width="1"/><rect x="1905.5" y="811" width="14" height="200" fill="url(#gtrack)"/><rect x="1905.5" y="811" width="14" height="14" fill="#dadada"/><rect x="1905.5" y="997" width="14" height="14" fill="#dadada"/><path d="M1909.1 820.3 l3.4 -4.4 l3.4 4.4z" fill="#222"/><path d="M1909.1 1001.7 l3.4 4.4 l3.4 -4.4z" fill="#222"/><rect x="1908.0" y="966.0" width="9" height="30.0" rx="4.5" fill="url(#ghandle)" stroke="#a3a3a3" stroke-width="1"/><text y="822.3" font-family="Liberation Serif" font-size="13.3" xml:space="preserve"><tspan x="5" fill="#9a9a9a" font-size="9.5" textLength="12.5" lengthAdjust="spacingAndGlyphs">&gt;&gt;&gt;</tspan><tspan x="24.3" fill="#111" textLength="124.5" lengthAdjust="spacing">FreeCAD.getDocument(</tspan><tspan x="150.0" fill="#e8141c" textLength="62.0" lengthAdjust="spacing">"Unnamed"</tspan><tspan x="212.3" fill="#111" textLength="56.0" lengthAdjust="spacing">).getObject(</tspan><tspan x="269.3" fill="#e8141c" textLength="55.7" lengthAdjust="spacing">"View002"</tspan><tspan x="325.5" fill="#111" textLength="54.5" lengthAdjust="spacing">).Direction</tspan><tspan x="387.0" fill="#8c8c8c" textLength="7.0" lengthAdjust="spacing">=</tspan><tspan x="401.0" fill="#8c8c8c">(</tspan><tspan x="405.0" fill="#1414e6" textLength="23.0" lengthAdjust="spacing">0.00</tspan><tspan x="429.5" fill="#8c8c8c">,</tspan><tspan x="438.2" fill="#1414e6" textLength="23.0" lengthAdjust="spacing">1.00</tspan><tspan x="462.5" fill="#8c8c8c">,</tspan><tspan x="471.0" fill="#1414e6" textLength="23.0" lengthAdjust="spacing">1.00</tspan><tspan x="495.5" fill="#8c8c8c">)</tspan></text><text y="838.3" font-family="Liberation Serif" font-size="13.3" xml:space="preserve"><tspan x="5" fill="#9a9a9a" font-size="9.5" textLength="12.5" lengthAdjust="spacingAndGlyphs">&gt;&gt;&gt;</tspan><tspan x="24.3" fill="#111" textLength="124.5" lengthAdjust="spacing">FreeCAD.getDocument(</tspan><tspan x="150.0" fill="#e8141c" textLength="62.0" lengthAdjust="spacing">"Unnamed"</tspan><tspan x="212.3" fill="#111" textLength="56.0" lengthAdjust="spacing">).getObject(</tspan><tspan x="269.3" fill="#e8141c" textLength="55.7" lengthAdjust="spacing">"View002"</tspan><tspan x="325.5" fill="#111" textLength="54.5" lengthAdjust="spacing">).Direction</tspan><tspan x="387.0" fill="#8c8c8c" textLength="7.0" lengthAdjust="spacing">=</tspan><tspan x="401.0" fill="#8c8c8c">(</tspan><tspan x="405.0" fill="#1414e6" textLength="23.0" lengthAdjust="spacing">1.00</tspan><tspan x="429.5" fill="#8c8c8c">,</tspan><tspan x="438.2" fill="#1414e6" textLength="23.0" lengthAdjust="spacing">1.00</tspan><tspan x="462.5" fill="#8c8c8c">,</tspan><tspan x="471.0" fill="#1414e6" textLength="23.0" lengthAdjust="spacing">1.00</tspan><tspan x="495.5" fill="#8c8c8c">)</tspan></text><text y="854.3" font-family="Liberation Serif" font-size="13.3" xml:space="preserve"><tspan x="5" fill="#9a9a9a" font-size="9.5" textLength="12.5" lengthAdjust="spacingAndGlyphs">&gt;&gt;&gt;</tspan><tspan x="24.3" fill="#111" textLength="124.5" lengthAdjust="spacing">FreeCAD.getDocument(</tspan><tspan x="150.0" fill="#e8141c" textLength="62.0" lengthAdjust="spacing">"Unnamed"</tspan><tspan x="212.3" fill="#111" textLength="56.0" lengthAdjust="spacing">).getObject(</tspan><tspan x="269.3" fill="#e8141c" textLength="55.7" lengthAdjust="spacing">"View002"</tspan><tspan x="325.5" fill="#111" textLength="34.5" lengthAdjust="spacing">).Scale</tspan><tspan x="367.0" fill="#8c8c8c" textLength="7.0" lengthAdjust="spacing">=</tspan><tspan x="380.3" fill="#1414e6" textLength="23.0" lengthAdjust="spacing">0.05</tspan></text><text y="870.3" font-family="Liberation Serif" font-size="13.3" xml:space="preserve"><tspan x="5" fill="#9a9a9a" font-size="9.5" textLength="12.5" lengthAdjust="spacingAndGlyphs">&gt;&gt;&gt;</tspan><tspan x="24.3" fill="#111" textLength="124.5" lengthAdjust="spacing">FreeCAD.getDocument(</tspan><tspan x="150.0" fill="#e8141c" textLength="62.0" lengthAdjust="spacing">"Unnamed"</tspan><tspan x="212.3" fill="#111" textLength="56.0" lengthAdjust="spacing">).getObject(</tspan><tspan x="269.3" fill="#e8141c" textLength="63.3" lengthAdjust="spacing">"DraftView"</tspan><tspan x="333.1" fill="#111" textLength="34.5" lengthAdjust="spacing">).Scale</tspan><tspan x="374.6" fill="#8c8c8c" textLength="7.0" lengthAdjust="spacing">=</tspan><tspan x="387.9" fill="#1414e6" textLength="23.0" lengthAdjust="spacing">0.04</tspan></text><text y="886.3" font-family="Liberation Serif" font-size="13.3" xml:space="preserve"><tspan x="5" fill="#9a9a9a" font-size="9.5" textLength="12.5" lengthAdjust="spacingAndGlyphs">&gt;&gt;&gt;</tspan><tspan x="24.3" fill="#111" textLength="124.5" lengthAdjust="spacing">FreeCAD.getDocument(</tspan><tspan x="150.0" fill="#e8141c" textLength="62.0" lengthAdjust="spacing">"Unnamed"</tspan><tspan x="212.3" fill="#111" textLength="56.0" lengthAdjust="spacing">).getObject(</tspan><tspan x="269.3" fill="#e8141c" textLength="55.7" lengthAdjust="spacing">"View002"</tspan><tspan x="325.5" fill="#111" textLength="34.5" lengthAdjust="spacing">).Scale</tspan><tspan x="367.0" fill="#8c8c8c" textLength="7.0" lengthAdjust="spacing">=</tspan><tspan x="380.3" fill="#1414e6" textLength="23.0" lengthAdjust="spacing">0.04</tspan></text><text y="902.3" font-family="Liberation Serif" font-size="13.3" xml:space="preserve"><tspan x="5" fill="#9a9a9a" font-size="9.5" textLength="12.5" lengthAdjust="spacingAndGlyphs">&gt;&gt;&gt;</tspan><tspan x="24.3" fill="#111" textLength="124.5" lengthAdjust="spacing">FreeCAD.getDocument(</tspan><tspan x="150.0" fill="#e8141c" textLength="62.0" lengthAdjust="spacing">"Unnamed"</tspan><tspan x="212.3" fill="#111" textLength="56.0" lengthAdjust="spacing">).getObject(</tspan><tspan x="269.3" fill="#e8141c" textLength="55.7" lengthAdjust="spacing">"View001"</tspan><tspan x="325.5" fill="#111" textLength="34.5" lengthAdjust="spacing">).Scale</tspan><tspan x="367.0" fill="#8c8c8c" textLength="7.0" lengthAdjust="spacing">=</tspan><tspan x="380.3" fill="#1414e6" textLength="23.0" lengthAdjust="spacing">0.04</tspan></text><text y="918.3" font-family="Liberation Serif" font-size="13.3" xml:space="preserve"><tspan x="5" fill="#9a9a9a" font-size="9.5" textLength="12.5" lengthAdjust="spacingAndGlyphs">&gt;&gt;&gt;</tspan><tspan x="24.3" fill="#111" textLength="124.5" lengthAdjust="spacing">FreeCAD.getDocument(</tspan><tspan x="150.0" fill="#e8141c" textLength="62.0" lengthAdjust="spacing">"Unnamed"</tspan><tspan x="212.3" fill="#111" textLength="56.0" lengthAdjust="spacing">).getObject(</tspan><tspan x="269.3" fill="#e8141c" textLength="36.5" lengthAdjust="spacing">"View"</tspan><tspan x="306.3" fill="#111" textLength="34.5" lengthAdjust="spacing">).Scale</tspan><tspan x="347.8" fill="#8c8c8c" textLength="7.0" lengthAdjust="spacing">=</tspan><tspan x="361.1" fill="#1414e6" textLength="23.0" lengthAdjust="spacing">0.04</tspan></text><text y="934.3" font-family="Liberation Serif" font-size="13.3" xml:space="preserve"><tspan x="5" fill="#9a9a9a" font-size="9.5" textLength="12.5" lengthAdjust="spacingAndGlyphs">&gt;&gt;&gt;</tspan><tspan x="24.3" fill="#111" textLength="204.0" lengthAdjust="spacing">App.ActiveDocument.Dimension002.X</tspan><tspan x="235.0" fill="#8c8c8c" textLength="7.0" lengthAdjust="spacing">=</tspan><tspan x="249.0" fill="#8c8c8c">-</tspan><tspan x="253.5" fill="#1414e6" textLength="55.0" lengthAdjust="spacing">91.043662</tspan></text><text y="950.3" font-family="Liberation Serif" font-size="13.3" xml:space="preserve"><tspan x="5" fill="#9a9a9a" font-size="9.5" textLength="12.5" lengthAdjust="spacingAndGlyphs">&gt;&gt;&gt;</tspan><tspan x="24.3" fill="#111" textLength="204.0" lengthAdjust="spacing">App.ActiveDocument.Dimension002.Y</tspan><tspan x="235.0" fill="#8c8c8c" textLength="7.0" lengthAdjust="spacing">=</tspan><tspan x="249.0" fill="#8c8c8c">-</tspan><tspan x="253.5" fill="#1414e6" textLength="48.2" lengthAdjust="spacing">8.535344</tspan></text><text y="966.3" font-family="Liberation Serif" font-size="13.3" xml:space="preserve"><tspan x="5" fill="#9a9a9a" font-size="9.5" textLength="12.5" lengthAdjust="spacingAndGlyphs">&gt;&gt;&gt;</tspan><tspan x="24.3" fill="#111" textLength="204.0" lengthAdjust="spacing">App.ActiveDocument.Dimension002.X</tspan><tspan x="235.0" fill="#8c8c8c" textLength="7.0" lengthAdjust="spacing">=</tspan><tspan x="249.0" fill="#8c8c8c">-</tspan><tspan x="253.5" fill="#1414e6" textLength="55.0" lengthAdjust="spacing">90.495942</tspan></text><text y="982.3" font-family="Liberation Serif" font-size="13.3" xml:space="preserve"><tspan x="5" fill="#9a9a9a" font-size="9.5" textLength="12.5" lengthAdjust="spacingAndGlyphs">&gt;&gt;&gt;</tspan><tspan x="24.3" fill="#111" textLength="204.0" lengthAdjust="spacing">App.ActiveDocument.Dimension002.Y</tspan><tspan x="235.0" fill="#8c8c8c" textLength="7.0" lengthAdjust="spacing">=</tspan><tspan x="249.0" fill="#8c8c8c">-</tspan><tspan x="253.5" fill="#1414e6" textLength="48.0" lengthAdjust="spacing">3.605841</tspan></text><text y="998.3" font-family="Liberation Serif" font-size="13.3" xml:space="preserve"><tspan x="5" fill="#9a9a9a" font-size="9.5" textLength="12.5" lengthAdjust="spacingAndGlyphs">&gt;&gt;&gt;</tspan></text><clipPath id="rvclip"><rect x="1421" y="811" width="484" height="200"/></clipPath><g clip-path="url(#rvclip)"><text x="1425" y="815.3" font-family="Liberation Serif" font-size="13.3" fill="#111" textLength="347.7" lengthAdjust="spacing" xml:space="preserve">('landing data:', 233.33333333333334, ':', 176.47058823529412)</text><text x="1425" y="831.3" font-family="Liberation Serif" font-size="13.3" fill="#111" textLength="347.7" lengthAdjust="spacing" xml:space="preserve">('landing data:', 233.33333333333334, ':', 176.47058823529412)</text><text x="1425" y="847.3" font-family="Liberation Serif" font-size="13.3" fill="#f3a41c" textLength="285.0" lengthAdjust="spacing" xml:space="preserve">DVS: SectionOrigin doesn’t intersect part in Section</text><text x="1425" y="863.3" font-family="Liberation Serif" font-size="13.3" fill="#f3a41c" textLength="202.7" lengthAdjust="spacing" xml:space="preserve">DVS: Using center of bounding box.</text><text x="1425" y="879.3" font-family="Liberation Serif" font-size="13.3" fill="#111" textLength="290.0" lengthAdjust="spacing" xml:space="preserve">INFO - DVS::execute - prism &amp; input don’t intersect</text><text x="1425" y="895.3" font-family="Liberation Serif" font-size="13.3" fill="#111" textLength="214.3" lengthAdjust="spacing" xml:space="preserve">Press Reset, OK or Cancel to continue</text><text x="1425" y="911.3" font-family="Liberation Serif" font-size="13.3" fill="#111" textLength="214.3" lengthAdjust="spacing" xml:space="preserve">Press Reset, OK or Cancel to continue</text><text x="1425" y="927.3" font-family="Liberation Serif" font-size="13.3" fill="#111" textLength="214.3" lengthAdjust="spacing" xml:space="preserve">Press Reset, OK or Cancel to continue</text><text x="1425" y="943.3" font-family="Liberation Serif" font-size="13.3" fill="#111" textLength="214.3" lengthAdjust="spacing" xml:space="preserve">Press Reset, OK or Cancel to continue</text><text x="1425" y="959.3" font-family="Liberation Serif" font-size="13.3" fill="#111" textLength="214.3" lengthAdjust="spacing" xml:space="preserve">Press Reset, OK or Cancel to continue</text><text x="1425" y="975.3" font-family="Liberation Serif" font-size="13.3" fill="#111" textLength="214.3" lengthAdjust="spacing" xml:space="preserve">Press Reset, OK or Cancel to continue</text><text x="1425" y="991.3" font-family="Liberation Serif" font-size="13.3" fill="#f3a41c" textLength="355.7" lengthAdjust="spacing" xml:space="preserve">DVP::extractFaces - input is not planar graph. No face detection</text></g><rect x="1706.500" y="1023.500" width="12" height="18" rx="5.5" fill="none" stroke="#1c1c1c" stroke-width="2"/><rect x="1711" y="1026" width="3" height="6" rx="1.2" fill="#1c1c1c"/><path d="M1777 1030.500 h8 l-4 5z" fill="#1a1a1a"/></svg>
</body></html>
